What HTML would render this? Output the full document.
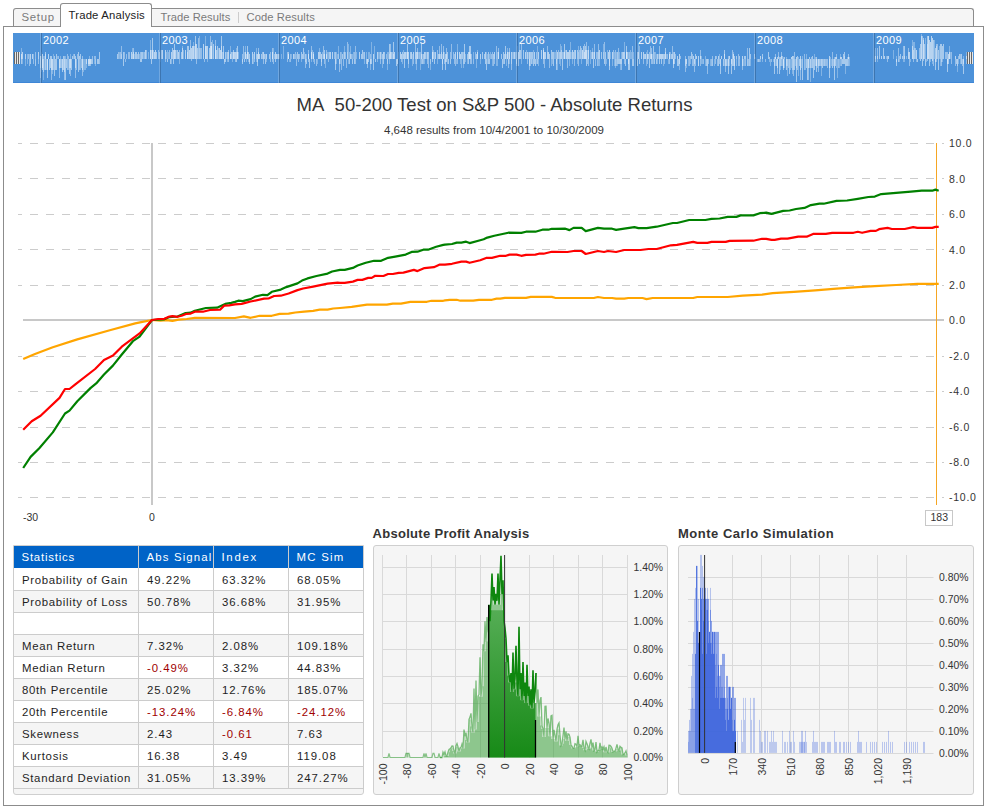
<!DOCTYPE html><html><head><meta charset="utf-8"><style>
*{box-sizing:border-box}
body{margin:0;width:986px;height:809px;position:relative;background:#fff;overflow:hidden;font-family:"Liberation Sans", sans-serif;color:#333}
.a{position:absolute}
.t{position:absolute;white-space:nowrap;line-height:1}
</style></head><body>
<div class="a" style="left:13px;top:8px;width:48px;height:19px;border:1px solid #8c8c8c;border-bottom:none;border-radius:3px 0 0 0;background:#f5f5f5"></div><div class="a" style="left:151px;top:8px;width:823px;height:19px;border:1px solid #8c8c8c;border-bottom:none;border-radius:0 3px 0 0;background:#f5f5f5"></div><div class="a" style="left:3px;top:26px;width:981px;height:780px;border:1px solid #8c8c8c;background:#fff"></div><div class="a" style="left:60px;top:3px;width:92px;height:24px;border:1px solid #8c8c8c;border-bottom:none;border-radius:3px 3px 0 0;background:#fff"></div><div class="t" style="left:21.5px;top:12px;font-size:11.4px;letter-spacing:0.7px;color:#7a7a7a">Setup</div><div class="t" style="left:68.5px;top:9.6px;font-size:11.3px;letter-spacing:0.2px;color:#222">Trade Analysis</div><div class="t" style="left:160.5px;top:12px;font-size:11.2px;letter-spacing:0.05px;color:#7a7a7a">Trade Results</div><div class="a" style="left:238px;top:12px;width:1px;height:11px;background:#ccc"></div><div class="t" style="left:246.5px;top:12px;font-size:11.2px;letter-spacing:0.1px;color:#7a7a7a">Code Results</div><svg class="a" style="left:13px;top:33px" width="961" height="50" viewBox="13 33 961 50"><rect x="13" y="33" width="961" height="50" fill="#4d92d9"/><rect x="13" y="82" width="961" height="1" fill="#3f86d6"/><rect x="21" y="54" width="1" height="5" fill="#fff" fill-opacity="0.6"/><rect x="21" y="59" width="1" height="5" fill="#fff" fill-opacity="0.5"/><rect x="21" y="48" width="1" height="11" fill="#fff" fill-opacity="0.3"/><rect x="22" y="52" width="1" height="7" fill="#fff" fill-opacity="0.6"/><rect x="22" y="59" width="1" height="5" fill="#fff" fill-opacity="0.3"/><rect x="25" y="54" width="1" height="5" fill="#fff" fill-opacity="0.6"/><rect x="25" y="59" width="1" height="7" fill="#fff" fill-opacity="0.3"/><rect x="27" y="54" width="1" height="5" fill="#fff" fill-opacity="0.3"/><rect x="27" y="59" width="1" height="5" fill="#fff" fill-opacity="0.3"/><rect x="28" y="54" width="1" height="5" fill="#fff" fill-opacity="0.4"/><rect x="29" y="54" width="1" height="5" fill="#fff" fill-opacity="0.3"/><rect x="29" y="59" width="1" height="7" fill="#fff" fill-opacity="0.4"/><rect x="30" y="54" width="1" height="5" fill="#fff" fill-opacity="0.6"/><rect x="30" y="59" width="1" height="5" fill="#fff" fill-opacity="0.5"/><rect x="32" y="54" width="1" height="5" fill="#fff" fill-opacity="0.6"/><rect x="33" y="54" width="1" height="5" fill="#fff" fill-opacity="0.3"/><rect x="33" y="59" width="1" height="5" fill="#fff" fill-opacity="0.4"/><rect x="35" y="52" width="1" height="7" fill="#fff" fill-opacity="0.4"/><rect x="35" y="59" width="1" height="7" fill="#fff" fill-opacity="0.5"/><rect x="38" y="52" width="1" height="7" fill="#fff" fill-opacity="0.6"/><rect x="38" y="59" width="1" height="5" fill="#fff" fill-opacity="0.4"/><rect x="40" y="56" width="1" height="3" fill="#fff" fill-opacity="0.5"/><rect x="40" y="59" width="1" height="9" fill="#fff" fill-opacity="0.3"/><rect x="40" y="59" width="1" height="19" fill="#fff" fill-opacity="0.3"/><rect x="41" y="56" width="1" height="3" fill="#fff" fill-opacity="0.6"/><rect x="41" y="59" width="1" height="13" fill="#fff" fill-opacity="0.4"/><rect x="41" y="52" width="1" height="7" fill="#fff" fill-opacity="0.3"/><rect x="42" y="54" width="1" height="5" fill="#fff" fill-opacity="0.6"/><rect x="42" y="59" width="1" height="9" fill="#fff" fill-opacity="0.5"/><rect x="42" y="59" width="1" height="11" fill="#fff" fill-opacity="0.5"/><rect x="43" y="56" width="1" height="3" fill="#fff" fill-opacity="0.3"/><rect x="43" y="59" width="1" height="13" fill="#fff" fill-opacity="0.4"/><rect x="43" y="59" width="1" height="21" fill="#fff" fill-opacity="0.3"/><rect x="44" y="56" width="1" height="3" fill="#fff" fill-opacity="0.3"/><rect x="44" y="59" width="1" height="11" fill="#fff" fill-opacity="0.3"/><rect x="45" y="54" width="1" height="5" fill="#fff" fill-opacity="0.4"/><rect x="45" y="59" width="1" height="11" fill="#fff" fill-opacity="0.5"/><rect x="45" y="52" width="1" height="7" fill="#fff" fill-opacity="0.5"/><rect x="46" y="59" width="1" height="11" fill="#fff" fill-opacity="0.3"/><rect x="47" y="59" width="1" height="11" fill="#fff" fill-opacity="0.5"/><rect x="47" y="59" width="1" height="19" fill="#fff" fill-opacity="0.5"/><rect x="48" y="54" width="1" height="5" fill="#fff" fill-opacity="0.6"/><rect x="49" y="59" width="1" height="11" fill="#fff" fill-opacity="0.5"/><rect x="50" y="56" width="1" height="3" fill="#fff" fill-opacity="0.5"/><rect x="50" y="59" width="1" height="9" fill="#fff" fill-opacity="0.5"/><rect x="51" y="56" width="1" height="3" fill="#fff" fill-opacity="0.5"/><rect x="51" y="59" width="1" height="11" fill="#fff" fill-opacity="0.5"/><rect x="51" y="59" width="1" height="21" fill="#fff" fill-opacity="0.4"/><rect x="52" y="59" width="1" height="11" fill="#fff" fill-opacity="0.5"/><rect x="52" y="59" width="1" height="15" fill="#fff" fill-opacity="0.3"/><rect x="53" y="54" width="1" height="5" fill="#fff" fill-opacity="0.3"/><rect x="53" y="59" width="1" height="11" fill="#fff" fill-opacity="0.4"/><rect x="54" y="56" width="1" height="3" fill="#fff" fill-opacity="0.5"/><rect x="54" y="59" width="1" height="17" fill="#fff" fill-opacity="0.5"/><rect x="55" y="59" width="1" height="11" fill="#fff" fill-opacity="0.5"/><rect x="56" y="54" width="1" height="5" fill="#fff" fill-opacity="0.5"/><rect x="56" y="59" width="1" height="11" fill="#fff" fill-opacity="0.5"/><rect x="57" y="56" width="1" height="3" fill="#fff" fill-opacity="0.3"/><rect x="58" y="56" width="1" height="3" fill="#fff" fill-opacity="0.4"/><rect x="59" y="59" width="1" height="9" fill="#fff" fill-opacity="0.5"/><rect x="59" y="59" width="1" height="19" fill="#fff" fill-opacity="0.4"/><rect x="60" y="56" width="1" height="3" fill="#fff" fill-opacity="0.3"/><rect x="60" y="59" width="1" height="9" fill="#fff" fill-opacity="0.5"/><rect x="61" y="59" width="1" height="9" fill="#fff" fill-opacity="0.4"/><rect x="62" y="59" width="1" height="11" fill="#fff" fill-opacity="0.3"/><rect x="62" y="59" width="1" height="13" fill="#fff" fill-opacity="0.5"/><rect x="63" y="56" width="1" height="3" fill="#fff" fill-opacity="0.5"/><rect x="63" y="59" width="1" height="11" fill="#fff" fill-opacity="0.5"/><rect x="64" y="56" width="1" height="3" fill="#fff" fill-opacity="0.4"/><rect x="64" y="59" width="1" height="13" fill="#fff" fill-opacity="0.4"/><rect x="64" y="59" width="1" height="21" fill="#fff" fill-opacity="0.4"/><rect x="65" y="56" width="1" height="3" fill="#fff" fill-opacity="0.3"/><rect x="65" y="59" width="1" height="21" fill="#fff" fill-opacity="0.5"/><rect x="66" y="59" width="1" height="9" fill="#fff" fill-opacity="0.5"/><rect x="67" y="54" width="1" height="5" fill="#fff" fill-opacity="0.4"/><rect x="67" y="59" width="1" height="11" fill="#fff" fill-opacity="0.4"/><rect x="68" y="56" width="1" height="3" fill="#fff" fill-opacity="0.4"/><rect x="68" y="59" width="1" height="11" fill="#fff" fill-opacity="0.3"/><rect x="69" y="59" width="1" height="9" fill="#fff" fill-opacity="0.3"/><rect x="69" y="59" width="1" height="15" fill="#fff" fill-opacity="0.5"/><rect x="70" y="54" width="1" height="5" fill="#fff" fill-opacity="0.3"/><rect x="70" y="59" width="1" height="9" fill="#fff" fill-opacity="0.5"/><rect x="70" y="59" width="1" height="17" fill="#fff" fill-opacity="0.4"/><rect x="71" y="59" width="1" height="11" fill="#fff" fill-opacity="0.5"/><rect x="72" y="56" width="1" height="3" fill="#fff" fill-opacity="0.5"/><rect x="73" y="54" width="1" height="5" fill="#fff" fill-opacity="0.3"/><rect x="74" y="54" width="1" height="5" fill="#fff" fill-opacity="0.5"/><rect x="75" y="56" width="1" height="3" fill="#fff" fill-opacity="0.5"/><rect x="75" y="59" width="1" height="9" fill="#fff" fill-opacity="0.5"/><rect x="75" y="59" width="1" height="19" fill="#fff" fill-opacity="0.4"/><rect x="76" y="59" width="1" height="11" fill="#fff" fill-opacity="0.4"/><rect x="77" y="54" width="1" height="5" fill="#fff" fill-opacity="0.4"/><rect x="78" y="59" width="1" height="13" fill="#fff" fill-opacity="0.5"/><rect x="78" y="52" width="1" height="7" fill="#fff" fill-opacity="0.5"/><rect x="79" y="56" width="1" height="3" fill="#fff" fill-opacity="0.5"/><rect x="79" y="59" width="1" height="11" fill="#fff" fill-opacity="0.4"/><rect x="80" y="54" width="1" height="5" fill="#fff" fill-opacity="0.5"/><rect x="80" y="59" width="1" height="11" fill="#fff" fill-opacity="0.3"/><rect x="81" y="59" width="1" height="9" fill="#fff" fill-opacity="0.4"/><rect x="82" y="56" width="1" height="3" fill="#fff" fill-opacity="0.4"/><rect x="82" y="59" width="1" height="11" fill="#fff" fill-opacity="0.5"/><rect x="82" y="59" width="1" height="17" fill="#fff" fill-opacity="0.4"/><rect x="83" y="59" width="1" height="13" fill="#fff" fill-opacity="0.3"/><rect x="84" y="59" width="1" height="11" fill="#fff" fill-opacity="0.3"/><rect x="85" y="59" width="1" height="11" fill="#fff" fill-opacity="0.3"/><rect x="86" y="59" width="1" height="5" fill="#fff" fill-opacity="0.5"/><rect x="86" y="59" width="1" height="9" fill="#fff" fill-opacity="0.3"/><rect x="88" y="59" width="1" height="5" fill="#fff" fill-opacity="0.4"/><rect x="88" y="59" width="1" height="7" fill="#fff" fill-opacity="0.5"/><rect x="89" y="56" width="1" height="3" fill="#fff" fill-opacity="0.3"/><rect x="89" y="59" width="1" height="5" fill="#fff" fill-opacity="0.4"/><rect x="89" y="59" width="1" height="7" fill="#fff" fill-opacity="0.5"/><rect x="90" y="59" width="1" height="5" fill="#fff" fill-opacity="0.5"/><rect x="90" y="59" width="1" height="7" fill="#fff" fill-opacity="0.4"/><rect x="91" y="59" width="1" height="5" fill="#fff" fill-opacity="0.5"/><rect x="92" y="56" width="1" height="3" fill="#fff" fill-opacity="0.4"/><rect x="92" y="59" width="1" height="5" fill="#fff" fill-opacity="0.5"/><rect x="94" y="56" width="1" height="3" fill="#fff" fill-opacity="0.4"/><rect x="94" y="59" width="1" height="5" fill="#fff" fill-opacity="0.3"/><rect x="95" y="56" width="1" height="3" fill="#fff" fill-opacity="0.4"/><rect x="95" y="59" width="1" height="5" fill="#fff" fill-opacity="0.3"/><rect x="95" y="59" width="1" height="7" fill="#fff" fill-opacity="0.3"/><rect x="97" y="59" width="1" height="5" fill="#fff" fill-opacity="0.5"/><rect x="98" y="59" width="1" height="5" fill="#fff" fill-opacity="0.5"/><rect x="99" y="59" width="1" height="5" fill="#fff" fill-opacity="0.4"/><rect x="99" y="52" width="1" height="7" fill="#fff" fill-opacity="0.5"/><rect x="117" y="54" width="1" height="5" fill="#fff" fill-opacity="0.5"/><rect x="118" y="52" width="1" height="7" fill="#fff" fill-opacity="0.4"/><rect x="119" y="52" width="1" height="7" fill="#fff" fill-opacity="0.3"/><rect x="120" y="52" width="1" height="7" fill="#fff" fill-opacity="0.4"/><rect x="121" y="54" width="1" height="5" fill="#fff" fill-opacity="0.3"/><rect x="121" y="46" width="1" height="13" fill="#fff" fill-opacity="0.4"/><rect x="123" y="52" width="1" height="7" fill="#fff" fill-opacity="0.5"/><rect x="123" y="59" width="1" height="7" fill="#fff" fill-opacity="0.5"/><rect x="124" y="52" width="1" height="7" fill="#fff" fill-opacity="0.4"/><rect x="125" y="59" width="1" height="3" fill="#fff" fill-opacity="0.4"/><rect x="126" y="54" width="1" height="5" fill="#fff" fill-opacity="0.4"/><rect x="128" y="52" width="1" height="7" fill="#fff" fill-opacity="0.4"/><rect x="129" y="52" width="1" height="7" fill="#fff" fill-opacity="0.4"/><rect x="131" y="52" width="1" height="7" fill="#fff" fill-opacity="0.6"/><rect x="132" y="54" width="1" height="5" fill="#fff" fill-opacity="0.3"/><rect x="132" y="48" width="1" height="11" fill="#fff" fill-opacity="0.3"/><rect x="133" y="52" width="1" height="7" fill="#fff" fill-opacity="0.5"/><rect x="133" y="48" width="1" height="11" fill="#fff" fill-opacity="0.4"/><rect x="134" y="54" width="1" height="5" fill="#fff" fill-opacity="0.3"/><rect x="135" y="52" width="1" height="7" fill="#fff" fill-opacity="0.5"/><rect x="136" y="52" width="1" height="7" fill="#fff" fill-opacity="0.5"/><rect x="137" y="54" width="1" height="5" fill="#fff" fill-opacity="0.4"/><rect x="138" y="52" width="1" height="7" fill="#fff" fill-opacity="0.5"/><rect x="139" y="54" width="1" height="5" fill="#fff" fill-opacity="0.3"/><rect x="140" y="52" width="1" height="7" fill="#fff" fill-opacity="0.4"/><rect x="140" y="59" width="1" height="3" fill="#fff" fill-opacity="0.5"/><rect x="141" y="52" width="1" height="7" fill="#fff" fill-opacity="0.5"/><rect x="141" y="59" width="1" height="3" fill="#fff" fill-opacity="0.5"/><rect x="142" y="52" width="1" height="7" fill="#fff" fill-opacity="0.5"/><rect x="143" y="52" width="1" height="7" fill="#fff" fill-opacity="0.3"/><rect x="144" y="52" width="1" height="7" fill="#fff" fill-opacity="0.4"/><rect x="145" y="50" width="1" height="9" fill="#fff" fill-opacity="0.6"/><rect x="146" y="50" width="1" height="9" fill="#fff" fill-opacity="0.4"/><rect x="148" y="52" width="1" height="7" fill="#fff" fill-opacity="0.3"/><rect x="150" y="50" width="1" height="9" fill="#fff" fill-opacity="0.6"/><rect x="150" y="40" width="1" height="19" fill="#fff" fill-opacity="0.3"/><rect x="151" y="50" width="1" height="9" fill="#fff" fill-opacity="0.4"/><rect x="151" y="59" width="1" height="5" fill="#fff" fill-opacity="0.5"/><rect x="152" y="50" width="1" height="9" fill="#fff" fill-opacity="0.5"/><rect x="152" y="38" width="1" height="21" fill="#fff" fill-opacity="0.5"/><rect x="153" y="50" width="1" height="9" fill="#fff" fill-opacity="0.4"/><rect x="154" y="52" width="1" height="7" fill="#fff" fill-opacity="0.6"/><rect x="155" y="50" width="1" height="9" fill="#fff" fill-opacity="0.6"/><rect x="156" y="52" width="1" height="7" fill="#fff" fill-opacity="0.5"/><rect x="158" y="50" width="1" height="9" fill="#fff" fill-opacity="0.4"/><rect x="159" y="52" width="1" height="7" fill="#fff" fill-opacity="0.4"/><rect x="160" y="50" width="1" height="9" fill="#fff" fill-opacity="0.3"/><rect x="160" y="59" width="1" height="3" fill="#fff" fill-opacity="0.3"/><rect x="161" y="50" width="1" height="9" fill="#fff" fill-opacity="0.4"/><rect x="162" y="50" width="1" height="9" fill="#fff" fill-opacity="0.6"/><rect x="165" y="50" width="1" height="9" fill="#fff" fill-opacity="0.6"/><rect x="165" y="59" width="1" height="3" fill="#fff" fill-opacity="0.4"/><rect x="166" y="52" width="1" height="7" fill="#fff" fill-opacity="0.3"/><rect x="167" y="50" width="1" height="9" fill="#fff" fill-opacity="0.3"/><rect x="167" y="59" width="1" height="3" fill="#fff" fill-opacity="0.5"/><rect x="168" y="52" width="1" height="7" fill="#fff" fill-opacity="0.3"/><rect x="169" y="50" width="1" height="9" fill="#fff" fill-opacity="0.4"/><rect x="170" y="59" width="1" height="5" fill="#fff" fill-opacity="0.5"/><rect x="171" y="52" width="1" height="7" fill="#fff" fill-opacity="0.6"/><rect x="171" y="59" width="1" height="5" fill="#fff" fill-opacity="0.3"/><rect x="172" y="48" width="1" height="11" fill="#fff" fill-opacity="0.5"/><rect x="173" y="50" width="1" height="9" fill="#fff" fill-opacity="0.6"/><rect x="173" y="59" width="1" height="5" fill="#fff" fill-opacity="0.5"/><rect x="174" y="50" width="1" height="9" fill="#fff" fill-opacity="0.4"/><rect x="174" y="44" width="1" height="15" fill="#fff" fill-opacity="0.5"/><rect x="175" y="50" width="1" height="9" fill="#fff" fill-opacity="0.6"/><rect x="176" y="50" width="1" height="9" fill="#fff" fill-opacity="0.3"/><rect x="177" y="50" width="1" height="9" fill="#fff" fill-opacity="0.5"/><rect x="178" y="52" width="1" height="7" fill="#fff" fill-opacity="0.6"/><rect x="179" y="50" width="1" height="9" fill="#fff" fill-opacity="0.4"/><rect x="179" y="59" width="1" height="5" fill="#fff" fill-opacity="0.3"/><rect x="181" y="52" width="1" height="7" fill="#fff" fill-opacity="0.5"/><rect x="182" y="48" width="1" height="11" fill="#fff" fill-opacity="0.5"/><rect x="182" y="46" width="1" height="13" fill="#fff" fill-opacity="0.3"/><rect x="183" y="50" width="1" height="9" fill="#fff" fill-opacity="0.3"/><rect x="185" y="50" width="1" height="9" fill="#fff" fill-opacity="0.6"/><rect x="187" y="52" width="1" height="7" fill="#fff" fill-opacity="0.4"/><rect x="187" y="46" width="1" height="13" fill="#fff" fill-opacity="0.5"/><rect x="188" y="46" width="1" height="13" fill="#fff" fill-opacity="0.5"/><rect x="189" y="50" width="1" height="9" fill="#fff" fill-opacity="0.6"/><rect x="190" y="46" width="1" height="13" fill="#fff" fill-opacity="0.3"/><rect x="190" y="40" width="1" height="19" fill="#fff" fill-opacity="0.4"/><rect x="191" y="48" width="1" height="11" fill="#fff" fill-opacity="0.6"/><rect x="191" y="59" width="1" height="2" fill="#fff" fill-opacity="0.4"/><rect x="192" y="46" width="1" height="13" fill="#fff" fill-opacity="0.6"/><rect x="193" y="46" width="1" height="13" fill="#fff" fill-opacity="0.5"/><rect x="193" y="42" width="1" height="17" fill="#fff" fill-opacity="0.3"/><rect x="194" y="46" width="1" height="13" fill="#fff" fill-opacity="0.4"/><rect x="195" y="44" width="1" height="15" fill="#fff" fill-opacity="0.4"/><rect x="195" y="36" width="1" height="23" fill="#fff" fill-opacity="0.5"/><rect x="196" y="44" width="1" height="15" fill="#fff" fill-opacity="0.6"/><rect x="196" y="59" width="1" height="5" fill="#fff" fill-opacity="0.4"/><rect x="197" y="48" width="1" height="11" fill="#fff" fill-opacity="0.5"/><rect x="198" y="38" width="1" height="21" fill="#fff" fill-opacity="0.4"/><rect x="199" y="48" width="1" height="11" fill="#fff" fill-opacity="0.3"/><rect x="199" y="36" width="1" height="23" fill="#fff" fill-opacity="0.3"/><rect x="200" y="48" width="1" height="11" fill="#fff" fill-opacity="0.4"/><rect x="201" y="48" width="1" height="11" fill="#fff" fill-opacity="0.4"/><rect x="203" y="44" width="1" height="15" fill="#fff" fill-opacity="0.6"/><rect x="204" y="59" width="1" height="3" fill="#fff" fill-opacity="0.4"/><rect x="205" y="46" width="1" height="13" fill="#fff" fill-opacity="0.6"/><rect x="205" y="36" width="1" height="23" fill="#fff" fill-opacity="0.3"/><rect x="206" y="46" width="1" height="13" fill="#fff" fill-opacity="0.6"/><rect x="207" y="46" width="1" height="13" fill="#fff" fill-opacity="0.6"/><rect x="207" y="59" width="1" height="3" fill="#fff" fill-opacity="0.3"/><rect x="209" y="48" width="1" height="11" fill="#fff" fill-opacity="0.5"/><rect x="210" y="46" width="1" height="13" fill="#fff" fill-opacity="0.5"/><rect x="210" y="36" width="1" height="23" fill="#fff" fill-opacity="0.4"/><rect x="211" y="46" width="1" height="13" fill="#fff" fill-opacity="0.6"/><rect x="211" y="42" width="1" height="17" fill="#fff" fill-opacity="0.5"/><rect x="212" y="40" width="1" height="19" fill="#fff" fill-opacity="0.3"/><rect x="213" y="44" width="1" height="15" fill="#fff" fill-opacity="0.5"/><rect x="215" y="46" width="1" height="13" fill="#fff" fill-opacity="0.6"/><rect x="215" y="40" width="1" height="19" fill="#fff" fill-opacity="0.4"/><rect x="216" y="50" width="1" height="9" fill="#fff" fill-opacity="0.5"/><rect x="217" y="46" width="1" height="13" fill="#fff" fill-opacity="0.5"/><rect x="218" y="48" width="1" height="11" fill="#fff" fill-opacity="0.3"/><rect x="219" y="48" width="1" height="11" fill="#fff" fill-opacity="0.6"/><rect x="220" y="50" width="1" height="9" fill="#fff" fill-opacity="0.6"/><rect x="221" y="46" width="1" height="13" fill="#fff" fill-opacity="0.4"/><rect x="221" y="36" width="1" height="23" fill="#fff" fill-opacity="0.5"/><rect x="222" y="52" width="1" height="7" fill="#fff" fill-opacity="0.4"/><rect x="223" y="52" width="1" height="7" fill="#fff" fill-opacity="0.3"/><rect x="223" y="46" width="1" height="13" fill="#fff" fill-opacity="0.5"/><rect x="224" y="59" width="1" height="3" fill="#fff" fill-opacity="0.3"/><rect x="224" y="59" width="1" height="5" fill="#fff" fill-opacity="0.4"/><rect x="225" y="52" width="1" height="7" fill="#fff" fill-opacity="0.5"/><rect x="225" y="59" width="1" height="3" fill="#fff" fill-opacity="0.5"/><rect x="226" y="52" width="1" height="7" fill="#fff" fill-opacity="0.3"/><rect x="227" y="52" width="1" height="7" fill="#fff" fill-opacity="0.5"/><rect x="227" y="59" width="1" height="3" fill="#fff" fill-opacity="0.3"/><rect x="228" y="52" width="1" height="7" fill="#fff" fill-opacity="0.4"/><rect x="228" y="59" width="1" height="3" fill="#fff" fill-opacity="0.4"/><rect x="228" y="50" width="1" height="9" fill="#fff" fill-opacity="0.4"/><rect x="230" y="54" width="1" height="5" fill="#fff" fill-opacity="0.6"/><rect x="230" y="46" width="1" height="13" fill="#fff" fill-opacity="0.3"/><rect x="231" y="52" width="1" height="7" fill="#fff" fill-opacity="0.5"/><rect x="232" y="52" width="1" height="7" fill="#fff" fill-opacity="0.4"/><rect x="232" y="59" width="1" height="3" fill="#fff" fill-opacity="0.3"/><rect x="233" y="52" width="1" height="7" fill="#fff" fill-opacity="0.4"/><rect x="233" y="50" width="1" height="9" fill="#fff" fill-opacity="0.5"/><rect x="234" y="52" width="1" height="7" fill="#fff" fill-opacity="0.6"/><rect x="235" y="52" width="1" height="7" fill="#fff" fill-opacity="0.6"/><rect x="235" y="59" width="1" height="3" fill="#fff" fill-opacity="0.4"/><rect x="236" y="52" width="1" height="7" fill="#fff" fill-opacity="0.4"/><rect x="236" y="59" width="1" height="3" fill="#fff" fill-opacity="0.5"/><rect x="236" y="48" width="1" height="11" fill="#fff" fill-opacity="0.3"/><rect x="237" y="52" width="1" height="7" fill="#fff" fill-opacity="0.5"/><rect x="237" y="46" width="1" height="13" fill="#fff" fill-opacity="0.5"/><rect x="238" y="52" width="1" height="7" fill="#fff" fill-opacity="0.3"/><rect x="242" y="54" width="1" height="5" fill="#fff" fill-opacity="0.4"/><rect x="242" y="59" width="1" height="3" fill="#fff" fill-opacity="0.3"/><rect x="242" y="59" width="1" height="5" fill="#fff" fill-opacity="0.5"/><rect x="243" y="46" width="1" height="13" fill="#fff" fill-opacity="0.4"/><rect x="244" y="52" width="1" height="7" fill="#fff" fill-opacity="0.3"/><rect x="244" y="59" width="1" height="3" fill="#fff" fill-opacity="0.5"/><rect x="245" y="52" width="1" height="7" fill="#fff" fill-opacity="0.6"/><rect x="245" y="46" width="1" height="13" fill="#fff" fill-opacity="0.3"/><rect x="246" y="54" width="1" height="5" fill="#fff" fill-opacity="0.4"/><rect x="246" y="59" width="1" height="3" fill="#fff" fill-opacity="0.3"/><rect x="247" y="52" width="1" height="7" fill="#fff" fill-opacity="0.5"/><rect x="247" y="46" width="1" height="13" fill="#fff" fill-opacity="0.5"/><rect x="248" y="52" width="1" height="7" fill="#fff" fill-opacity="0.5"/><rect x="248" y="59" width="1" height="3" fill="#fff" fill-opacity="0.3"/><rect x="249" y="54" width="1" height="5" fill="#fff" fill-opacity="0.5"/><rect x="249" y="59" width="1" height="3" fill="#fff" fill-opacity="0.3"/><rect x="249" y="59" width="1" height="5" fill="#fff" fill-opacity="0.5"/><rect x="252" y="52" width="1" height="7" fill="#fff" fill-opacity="0.6"/><rect x="252" y="59" width="1" height="5" fill="#fff" fill-opacity="0.5"/><rect x="253" y="54" width="1" height="5" fill="#fff" fill-opacity="0.3"/><rect x="253" y="59" width="1" height="5" fill="#fff" fill-opacity="0.3"/><rect x="254" y="52" width="1" height="7" fill="#fff" fill-opacity="0.6"/><rect x="254" y="59" width="1" height="3" fill="#fff" fill-opacity="0.4"/><rect x="256" y="54" width="1" height="5" fill="#fff" fill-opacity="0.3"/><rect x="256" y="59" width="1" height="3" fill="#fff" fill-opacity="0.3"/><rect x="256" y="48" width="1" height="11" fill="#fff" fill-opacity="0.3"/><rect x="257" y="54" width="1" height="5" fill="#fff" fill-opacity="0.6"/><rect x="257" y="59" width="1" height="3" fill="#fff" fill-opacity="0.3"/><rect x="257" y="59" width="1" height="7" fill="#fff" fill-opacity="0.5"/><rect x="258" y="52" width="1" height="7" fill="#fff" fill-opacity="0.5"/><rect x="258" y="48" width="1" height="11" fill="#fff" fill-opacity="0.4"/><rect x="259" y="54" width="1" height="5" fill="#fff" fill-opacity="0.6"/><rect x="261" y="54" width="1" height="5" fill="#fff" fill-opacity="0.5"/><rect x="262" y="52" width="1" height="7" fill="#fff" fill-opacity="0.4"/><rect x="263" y="52" width="1" height="7" fill="#fff" fill-opacity="0.6"/><rect x="263" y="59" width="1" height="5" fill="#fff" fill-opacity="0.4"/><rect x="264" y="54" width="1" height="5" fill="#fff" fill-opacity="0.5"/><rect x="265" y="54" width="1" height="5" fill="#fff" fill-opacity="0.4"/><rect x="265" y="59" width="1" height="5" fill="#fff" fill-opacity="0.5"/><rect x="266" y="54" width="1" height="5" fill="#fff" fill-opacity="0.6"/><rect x="266" y="59" width="1" height="3" fill="#fff" fill-opacity="0.3"/><rect x="269" y="54" width="1" height="5" fill="#fff" fill-opacity="0.5"/><rect x="270" y="52" width="1" height="7" fill="#fff" fill-opacity="0.4"/><rect x="270" y="59" width="1" height="3" fill="#fff" fill-opacity="0.4"/><rect x="272" y="52" width="1" height="7" fill="#fff" fill-opacity="0.6"/><rect x="272" y="59" width="1" height="3" fill="#fff" fill-opacity="0.4"/><rect x="272" y="48" width="1" height="11" fill="#fff" fill-opacity="0.4"/><rect x="273" y="59" width="1" height="5" fill="#fff" fill-opacity="0.4"/><rect x="273" y="48" width="1" height="11" fill="#fff" fill-opacity="0.3"/><rect x="274" y="54" width="1" height="5" fill="#fff" fill-opacity="0.4"/><rect x="275" y="52" width="1" height="7" fill="#fff" fill-opacity="0.6"/><rect x="275" y="59" width="1" height="3" fill="#fff" fill-opacity="0.5"/><rect x="276" y="54" width="1" height="5" fill="#fff" fill-opacity="0.6"/><rect x="277" y="54" width="1" height="5" fill="#fff" fill-opacity="0.4"/><rect x="278" y="54" width="1" height="5" fill="#fff" fill-opacity="0.5"/><rect x="279" y="54" width="1" height="5" fill="#fff" fill-opacity="0.6"/><rect x="281" y="54" width="1" height="5" fill="#fff" fill-opacity="0.3"/><rect x="283" y="46" width="1" height="13" fill="#fff" fill-opacity="0.3"/><rect x="287" y="52" width="1" height="7" fill="#fff" fill-opacity="0.4"/><rect x="287" y="59" width="1" height="3" fill="#fff" fill-opacity="0.4"/><rect x="288" y="54" width="1" height="5" fill="#fff" fill-opacity="0.6"/><rect x="288" y="52" width="1" height="7" fill="#fff" fill-opacity="0.5"/><rect x="289" y="59" width="1" height="3" fill="#fff" fill-opacity="0.3"/><rect x="290" y="54" width="1" height="5" fill="#fff" fill-opacity="0.4"/><rect x="290" y="59" width="1" height="3" fill="#fff" fill-opacity="0.4"/><rect x="291" y="54" width="1" height="5" fill="#fff" fill-opacity="0.3"/><rect x="293" y="54" width="1" height="5" fill="#fff" fill-opacity="0.6"/><rect x="294" y="54" width="1" height="5" fill="#fff" fill-opacity="0.4"/><rect x="295" y="52" width="1" height="7" fill="#fff" fill-opacity="0.4"/><rect x="296" y="54" width="1" height="5" fill="#fff" fill-opacity="0.3"/><rect x="296" y="59" width="1" height="7" fill="#fff" fill-opacity="0.4"/><rect x="297" y="52" width="1" height="7" fill="#fff" fill-opacity="0.5"/><rect x="298" y="54" width="1" height="5" fill="#fff" fill-opacity="0.5"/><rect x="298" y="59" width="1" height="3" fill="#fff" fill-opacity="0.4"/><rect x="299" y="54" width="1" height="5" fill="#fff" fill-opacity="0.4"/><rect x="301" y="52" width="1" height="7" fill="#fff" fill-opacity="0.5"/><rect x="301" y="59" width="1" height="3" fill="#fff" fill-opacity="0.3"/><rect x="302" y="54" width="1" height="5" fill="#fff" fill-opacity="0.5"/><rect x="303" y="48" width="1" height="11" fill="#fff" fill-opacity="0.5"/><rect x="304" y="52" width="1" height="7" fill="#fff" fill-opacity="0.3"/><rect x="305" y="54" width="1" height="5" fill="#fff" fill-opacity="0.5"/><rect x="305" y="59" width="1" height="3" fill="#fff" fill-opacity="0.3"/><rect x="305" y="59" width="1" height="9" fill="#fff" fill-opacity="0.4"/><rect x="306" y="54" width="1" height="5" fill="#fff" fill-opacity="0.3"/><rect x="306" y="59" width="1" height="5" fill="#fff" fill-opacity="0.5"/><rect x="308" y="54" width="1" height="5" fill="#fff" fill-opacity="0.6"/><rect x="308" y="59" width="1" height="3" fill="#fff" fill-opacity="0.4"/><rect x="308" y="50" width="1" height="9" fill="#fff" fill-opacity="0.4"/><rect x="309" y="59" width="1" height="9" fill="#fff" fill-opacity="0.5"/><rect x="311" y="52" width="1" height="7" fill="#fff" fill-opacity="0.6"/><rect x="311" y="59" width="1" height="3" fill="#fff" fill-opacity="0.3"/><rect x="311" y="46" width="1" height="13" fill="#fff" fill-opacity="0.4"/><rect x="312" y="50" width="1" height="9" fill="#fff" fill-opacity="0.3"/><rect x="313" y="54" width="1" height="5" fill="#fff" fill-opacity="0.5"/><rect x="313" y="59" width="1" height="3" fill="#fff" fill-opacity="0.3"/><rect x="313" y="52" width="1" height="7" fill="#fff" fill-opacity="0.5"/><rect x="314" y="59" width="1" height="5" fill="#fff" fill-opacity="0.4"/><rect x="316" y="59" width="1" height="7" fill="#fff" fill-opacity="0.4"/><rect x="317" y="59" width="1" height="5" fill="#fff" fill-opacity="0.3"/><rect x="318" y="52" width="1" height="7" fill="#fff" fill-opacity="0.6"/><rect x="319" y="52" width="1" height="7" fill="#fff" fill-opacity="0.4"/><rect x="319" y="48" width="1" height="11" fill="#fff" fill-opacity="0.3"/><rect x="320" y="52" width="1" height="7" fill="#fff" fill-opacity="0.5"/><rect x="321" y="54" width="1" height="5" fill="#fff" fill-opacity="0.6"/><rect x="321" y="59" width="1" height="3" fill="#fff" fill-opacity="0.3"/><rect x="321" y="59" width="1" height="7" fill="#fff" fill-opacity="0.5"/><rect x="322" y="52" width="1" height="7" fill="#fff" fill-opacity="0.3"/><rect x="323" y="54" width="1" height="5" fill="#fff" fill-opacity="0.3"/><rect x="323" y="46" width="1" height="13" fill="#fff" fill-opacity="0.4"/><rect x="324" y="54" width="1" height="5" fill="#fff" fill-opacity="0.5"/><rect x="324" y="59" width="1" height="5" fill="#fff" fill-opacity="0.4"/><rect x="324" y="50" width="1" height="9" fill="#fff" fill-opacity="0.5"/><rect x="325" y="59" width="1" height="9" fill="#fff" fill-opacity="0.3"/><rect x="326" y="54" width="1" height="5" fill="#fff" fill-opacity="0.5"/><rect x="326" y="50" width="1" height="9" fill="#fff" fill-opacity="0.4"/><rect x="327" y="52" width="1" height="7" fill="#fff" fill-opacity="0.3"/><rect x="328" y="52" width="1" height="7" fill="#fff" fill-opacity="0.3"/><rect x="328" y="59" width="1" height="3" fill="#fff" fill-opacity="0.4"/><rect x="329" y="52" width="1" height="7" fill="#fff" fill-opacity="0.5"/><rect x="330" y="52" width="1" height="7" fill="#fff" fill-opacity="0.6"/><rect x="332" y="52" width="1" height="7" fill="#fff" fill-opacity="0.6"/><rect x="334" y="52" width="1" height="7" fill="#fff" fill-opacity="0.4"/><rect x="335" y="52" width="1" height="7" fill="#fff" fill-opacity="0.5"/><rect x="335" y="59" width="1" height="5" fill="#fff" fill-opacity="0.3"/><rect x="335" y="59" width="1" height="11" fill="#fff" fill-opacity="0.5"/><rect x="336" y="52" width="1" height="7" fill="#fff" fill-opacity="0.3"/><rect x="336" y="59" width="1" height="5" fill="#fff" fill-opacity="0.3"/><rect x="337" y="54" width="1" height="5" fill="#fff" fill-opacity="0.3"/><rect x="338" y="54" width="1" height="5" fill="#fff" fill-opacity="0.3"/><rect x="338" y="46" width="1" height="13" fill="#fff" fill-opacity="0.3"/><rect x="339" y="59" width="1" height="5" fill="#fff" fill-opacity="0.4"/><rect x="339" y="59" width="1" height="13" fill="#fff" fill-opacity="0.4"/><rect x="340" y="52" width="1" height="7" fill="#fff" fill-opacity="0.4"/><rect x="340" y="59" width="1" height="5" fill="#fff" fill-opacity="0.3"/><rect x="341" y="52" width="1" height="7" fill="#fff" fill-opacity="0.3"/><rect x="341" y="59" width="1" height="11" fill="#fff" fill-opacity="0.4"/><rect x="342" y="54" width="1" height="5" fill="#fff" fill-opacity="0.5"/><rect x="343" y="52" width="1" height="7" fill="#fff" fill-opacity="0.3"/><rect x="343" y="59" width="1" height="7" fill="#fff" fill-opacity="0.4"/><rect x="344" y="52" width="1" height="7" fill="#fff" fill-opacity="0.4"/><rect x="344" y="46" width="1" height="13" fill="#fff" fill-opacity="0.3"/><rect x="345" y="52" width="1" height="7" fill="#fff" fill-opacity="0.4"/><rect x="346" y="59" width="1" height="9" fill="#fff" fill-opacity="0.4"/><rect x="347" y="52" width="1" height="7" fill="#fff" fill-opacity="0.3"/><rect x="347" y="42" width="1" height="17" fill="#fff" fill-opacity="0.4"/><rect x="348" y="59" width="1" height="5" fill="#fff" fill-opacity="0.3"/><rect x="348" y="44" width="1" height="15" fill="#fff" fill-opacity="0.3"/><rect x="349" y="52" width="1" height="7" fill="#fff" fill-opacity="0.3"/><rect x="349" y="59" width="1" height="5" fill="#fff" fill-opacity="0.5"/><rect x="350" y="54" width="1" height="5" fill="#fff" fill-opacity="0.4"/><rect x="350" y="46" width="1" height="13" fill="#fff" fill-opacity="0.3"/><rect x="351" y="54" width="1" height="5" fill="#fff" fill-opacity="0.4"/><rect x="352" y="54" width="1" height="5" fill="#fff" fill-opacity="0.3"/><rect x="352" y="59" width="1" height="5" fill="#fff" fill-opacity="0.5"/><rect x="353" y="52" width="1" height="7" fill="#fff" fill-opacity="0.3"/><rect x="354" y="52" width="1" height="7" fill="#fff" fill-opacity="0.4"/><rect x="354" y="59" width="1" height="5" fill="#fff" fill-opacity="0.5"/><rect x="355" y="59" width="1" height="5" fill="#fff" fill-opacity="0.4"/><rect x="355" y="46" width="1" height="13" fill="#fff" fill-opacity="0.4"/><rect x="356" y="52" width="1" height="7" fill="#fff" fill-opacity="0.3"/><rect x="359" y="52" width="1" height="7" fill="#fff" fill-opacity="0.6"/><rect x="361" y="54" width="1" height="5" fill="#fff" fill-opacity="0.5"/><rect x="362" y="50" width="1" height="9" fill="#fff" fill-opacity="0.5"/><rect x="363" y="52" width="1" height="7" fill="#fff" fill-opacity="0.4"/><rect x="364" y="52" width="1" height="7" fill="#fff" fill-opacity="0.5"/><rect x="364" y="59" width="1" height="5" fill="#fff" fill-opacity="0.3"/><rect x="366" y="52" width="1" height="7" fill="#fff" fill-opacity="0.3"/><rect x="366" y="59" width="1" height="5" fill="#fff" fill-opacity="0.5"/><rect x="367" y="59" width="1" height="5" fill="#fff" fill-opacity="0.5"/><rect x="367" y="59" width="1" height="9" fill="#fff" fill-opacity="0.4"/><rect x="368" y="52" width="1" height="7" fill="#fff" fill-opacity="0.3"/><rect x="368" y="59" width="1" height="3" fill="#fff" fill-opacity="0.5"/><rect x="369" y="52" width="1" height="7" fill="#fff" fill-opacity="0.3"/><rect x="370" y="54" width="1" height="5" fill="#fff" fill-opacity="0.4"/><rect x="370" y="59" width="1" height="5" fill="#fff" fill-opacity="0.5"/><rect x="370" y="59" width="1" height="11" fill="#fff" fill-opacity="0.3"/><rect x="371" y="59" width="1" height="5" fill="#fff" fill-opacity="0.5"/><rect x="371" y="42" width="1" height="17" fill="#fff" fill-opacity="0.3"/><rect x="373" y="54" width="1" height="5" fill="#fff" fill-opacity="0.6"/><rect x="373" y="59" width="1" height="11" fill="#fff" fill-opacity="0.5"/><rect x="374" y="46" width="1" height="13" fill="#fff" fill-opacity="0.3"/><rect x="375" y="59" width="1" height="3" fill="#fff" fill-opacity="0.5"/><rect x="377" y="52" width="1" height="7" fill="#fff" fill-opacity="0.6"/><rect x="377" y="59" width="1" height="3" fill="#fff" fill-opacity="0.3"/><rect x="378" y="52" width="1" height="7" fill="#fff" fill-opacity="0.3"/><rect x="379" y="52" width="1" height="7" fill="#fff" fill-opacity="0.3"/><rect x="380" y="52" width="1" height="7" fill="#fff" fill-opacity="0.6"/><rect x="380" y="59" width="1" height="5" fill="#fff" fill-opacity="0.4"/><rect x="381" y="52" width="1" height="7" fill="#fff" fill-opacity="0.3"/><rect x="382" y="54" width="1" height="5" fill="#fff" fill-opacity="0.5"/><rect x="382" y="59" width="1" height="9" fill="#fff" fill-opacity="0.3"/><rect x="383" y="52" width="1" height="7" fill="#fff" fill-opacity="0.6"/><rect x="383" y="59" width="1" height="5" fill="#fff" fill-opacity="0.5"/><rect x="384" y="52" width="1" height="7" fill="#fff" fill-opacity="0.5"/><rect x="386" y="54" width="1" height="5" fill="#fff" fill-opacity="0.4"/><rect x="387" y="52" width="1" height="7" fill="#fff" fill-opacity="0.3"/><rect x="387" y="59" width="1" height="5" fill="#fff" fill-opacity="0.4"/><rect x="387" y="59" width="1" height="11" fill="#fff" fill-opacity="0.3"/><rect x="388" y="52" width="1" height="7" fill="#fff" fill-opacity="0.3"/><rect x="389" y="54" width="1" height="5" fill="#fff" fill-opacity="0.3"/><rect x="389" y="59" width="1" height="5" fill="#fff" fill-opacity="0.3"/><rect x="389" y="44" width="1" height="15" fill="#fff" fill-opacity="0.5"/><rect x="390" y="52" width="1" height="7" fill="#fff" fill-opacity="0.5"/><rect x="390" y="44" width="1" height="15" fill="#fff" fill-opacity="0.4"/><rect x="391" y="52" width="1" height="7" fill="#fff" fill-opacity="0.5"/><rect x="392" y="52" width="1" height="7" fill="#fff" fill-opacity="0.4"/><rect x="393" y="54" width="1" height="5" fill="#fff" fill-opacity="0.4"/><rect x="393" y="42" width="1" height="17" fill="#fff" fill-opacity="0.5"/><rect x="394" y="52" width="1" height="7" fill="#fff" fill-opacity="0.6"/><rect x="396" y="59" width="1" height="7" fill="#fff" fill-opacity="0.5"/><rect x="397" y="59" width="1" height="5" fill="#fff" fill-opacity="0.5"/><rect x="398" y="52" width="1" height="7" fill="#fff" fill-opacity="0.6"/><rect x="400" y="52" width="1" height="7" fill="#fff" fill-opacity="0.6"/><rect x="401" y="54" width="1" height="5" fill="#fff" fill-opacity="0.6"/><rect x="401" y="59" width="1" height="3" fill="#fff" fill-opacity="0.4"/><rect x="402" y="52" width="1" height="7" fill="#fff" fill-opacity="0.5"/><rect x="402" y="59" width="1" height="5" fill="#fff" fill-opacity="0.3"/><rect x="403" y="54" width="1" height="5" fill="#fff" fill-opacity="0.4"/><rect x="403" y="50" width="1" height="9" fill="#fff" fill-opacity="0.3"/><rect x="404" y="52" width="1" height="7" fill="#fff" fill-opacity="0.6"/><rect x="404" y="59" width="1" height="9" fill="#fff" fill-opacity="0.5"/><rect x="405" y="52" width="1" height="7" fill="#fff" fill-opacity="0.6"/><rect x="406" y="52" width="1" height="7" fill="#fff" fill-opacity="0.4"/><rect x="407" y="52" width="1" height="7" fill="#fff" fill-opacity="0.5"/><rect x="407" y="44" width="1" height="15" fill="#fff" fill-opacity="0.5"/><rect x="408" y="52" width="1" height="7" fill="#fff" fill-opacity="0.6"/><rect x="408" y="59" width="1" height="5" fill="#fff" fill-opacity="0.4"/><rect x="408" y="59" width="1" height="9" fill="#fff" fill-opacity="0.3"/><rect x="410" y="52" width="1" height="7" fill="#fff" fill-opacity="0.5"/><rect x="411" y="52" width="1" height="7" fill="#fff" fill-opacity="0.6"/><rect x="412" y="54" width="1" height="5" fill="#fff" fill-opacity="0.3"/><rect x="412" y="59" width="1" height="7" fill="#fff" fill-opacity="0.3"/><rect x="413" y="52" width="1" height="7" fill="#fff" fill-opacity="0.6"/><rect x="413" y="59" width="1" height="5" fill="#fff" fill-opacity="0.4"/><rect x="415" y="52" width="1" height="7" fill="#fff" fill-opacity="0.3"/><rect x="415" y="59" width="1" height="5" fill="#fff" fill-opacity="0.3"/><rect x="415" y="44" width="1" height="15" fill="#fff" fill-opacity="0.4"/><rect x="416" y="52" width="1" height="7" fill="#fff" fill-opacity="0.6"/><rect x="416" y="59" width="1" height="5" fill="#fff" fill-opacity="0.3"/><rect x="416" y="59" width="1" height="11" fill="#fff" fill-opacity="0.3"/><rect x="417" y="52" width="1" height="7" fill="#fff" fill-opacity="0.5"/><rect x="417" y="48" width="1" height="11" fill="#fff" fill-opacity="0.4"/><rect x="418" y="52" width="1" height="7" fill="#fff" fill-opacity="0.3"/><rect x="419" y="52" width="1" height="7" fill="#fff" fill-opacity="0.4"/><rect x="420" y="52" width="1" height="7" fill="#fff" fill-opacity="0.3"/><rect x="420" y="59" width="1" height="11" fill="#fff" fill-opacity="0.3"/><rect x="421" y="54" width="1" height="5" fill="#fff" fill-opacity="0.4"/><rect x="421" y="59" width="1" height="5" fill="#fff" fill-opacity="0.4"/><rect x="421" y="44" width="1" height="15" fill="#fff" fill-opacity="0.5"/><rect x="422" y="54" width="1" height="5" fill="#fff" fill-opacity="0.3"/><rect x="422" y="59" width="1" height="5" fill="#fff" fill-opacity="0.5"/><rect x="423" y="54" width="1" height="5" fill="#fff" fill-opacity="0.5"/><rect x="423" y="59" width="1" height="5" fill="#fff" fill-opacity="0.4"/><rect x="424" y="52" width="1" height="7" fill="#fff" fill-opacity="0.6"/><rect x="424" y="59" width="1" height="5" fill="#fff" fill-opacity="0.3"/><rect x="425" y="52" width="1" height="7" fill="#fff" fill-opacity="0.5"/><rect x="426" y="52" width="1" height="7" fill="#fff" fill-opacity="0.3"/><rect x="427" y="52" width="1" height="7" fill="#fff" fill-opacity="0.6"/><rect x="427" y="59" width="1" height="5" fill="#fff" fill-opacity="0.4"/><rect x="428" y="52" width="1" height="7" fill="#fff" fill-opacity="0.5"/><rect x="428" y="59" width="1" height="9" fill="#fff" fill-opacity="0.4"/><rect x="430" y="59" width="1" height="5" fill="#fff" fill-opacity="0.3"/><rect x="430" y="59" width="1" height="11" fill="#fff" fill-opacity="0.3"/><rect x="432" y="52" width="1" height="7" fill="#fff" fill-opacity="0.6"/><rect x="432" y="59" width="1" height="3" fill="#fff" fill-opacity="0.5"/><rect x="432" y="46" width="1" height="13" fill="#fff" fill-opacity="0.4"/><rect x="433" y="52" width="1" height="7" fill="#fff" fill-opacity="0.3"/><rect x="433" y="50" width="1" height="9" fill="#fff" fill-opacity="0.3"/><rect x="434" y="52" width="1" height="7" fill="#fff" fill-opacity="0.4"/><rect x="434" y="59" width="1" height="5" fill="#fff" fill-opacity="0.5"/><rect x="435" y="52" width="1" height="7" fill="#fff" fill-opacity="0.6"/><rect x="437" y="59" width="1" height="5" fill="#fff" fill-opacity="0.3"/><rect x="437" y="50" width="1" height="9" fill="#fff" fill-opacity="0.4"/><rect x="438" y="54" width="1" height="5" fill="#fff" fill-opacity="0.5"/><rect x="439" y="54" width="1" height="5" fill="#fff" fill-opacity="0.4"/><rect x="439" y="46" width="1" height="13" fill="#fff" fill-opacity="0.4"/><rect x="440" y="54" width="1" height="5" fill="#fff" fill-opacity="0.4"/><rect x="441" y="52" width="1" height="7" fill="#fff" fill-opacity="0.4"/><rect x="441" y="44" width="1" height="15" fill="#fff" fill-opacity="0.4"/><rect x="442" y="54" width="1" height="5" fill="#fff" fill-opacity="0.3"/><rect x="442" y="59" width="1" height="5" fill="#fff" fill-opacity="0.4"/><rect x="442" y="59" width="1" height="11" fill="#fff" fill-opacity="0.5"/><rect x="443" y="52" width="1" height="7" fill="#fff" fill-opacity="0.5"/><rect x="443" y="46" width="1" height="13" fill="#fff" fill-opacity="0.4"/><rect x="444" y="52" width="1" height="7" fill="#fff" fill-opacity="0.3"/><rect x="444" y="59" width="1" height="5" fill="#fff" fill-opacity="0.4"/><rect x="445" y="54" width="1" height="5" fill="#fff" fill-opacity="0.5"/><rect x="445" y="59" width="1" height="3" fill="#fff" fill-opacity="0.3"/><rect x="445" y="59" width="1" height="11" fill="#fff" fill-opacity="0.5"/><rect x="446" y="54" width="1" height="5" fill="#fff" fill-opacity="0.5"/><rect x="446" y="59" width="1" height="3" fill="#fff" fill-opacity="0.5"/><rect x="446" y="48" width="1" height="11" fill="#fff" fill-opacity="0.4"/><rect x="447" y="52" width="1" height="7" fill="#fff" fill-opacity="0.5"/><rect x="447" y="59" width="1" height="5" fill="#fff" fill-opacity="0.3"/><rect x="448" y="59" width="1" height="5" fill="#fff" fill-opacity="0.5"/><rect x="450" y="52" width="1" height="7" fill="#fff" fill-opacity="0.4"/><rect x="450" y="59" width="1" height="5" fill="#fff" fill-opacity="0.5"/><rect x="451" y="44" width="1" height="15" fill="#fff" fill-opacity="0.4"/><rect x="453" y="52" width="1" height="7" fill="#fff" fill-opacity="0.4"/><rect x="454" y="54" width="1" height="5" fill="#fff" fill-opacity="0.4"/><rect x="454" y="59" width="1" height="5" fill="#fff" fill-opacity="0.4"/><rect x="455" y="52" width="1" height="7" fill="#fff" fill-opacity="0.6"/><rect x="455" y="59" width="1" height="7" fill="#fff" fill-opacity="0.4"/><rect x="456" y="59" width="1" height="5" fill="#fff" fill-opacity="0.3"/><rect x="457" y="52" width="1" height="7" fill="#fff" fill-opacity="0.6"/><rect x="457" y="59" width="1" height="5" fill="#fff" fill-opacity="0.4"/><rect x="457" y="44" width="1" height="15" fill="#fff" fill-opacity="0.3"/><rect x="459" y="52" width="1" height="7" fill="#fff" fill-opacity="0.6"/><rect x="460" y="54" width="1" height="5" fill="#fff" fill-opacity="0.6"/><rect x="460" y="59" width="1" height="5" fill="#fff" fill-opacity="0.3"/><rect x="461" y="52" width="1" height="7" fill="#fff" fill-opacity="0.5"/><rect x="461" y="59" width="1" height="9" fill="#fff" fill-opacity="0.3"/><rect x="462" y="52" width="1" height="7" fill="#fff" fill-opacity="0.5"/><rect x="463" y="52" width="1" height="7" fill="#fff" fill-opacity="0.4"/><rect x="463" y="59" width="1" height="5" fill="#fff" fill-opacity="0.3"/><rect x="463" y="59" width="1" height="9" fill="#fff" fill-opacity="0.3"/><rect x="464" y="52" width="1" height="7" fill="#fff" fill-opacity="0.3"/><rect x="464" y="59" width="1" height="5" fill="#fff" fill-opacity="0.5"/><rect x="464" y="44" width="1" height="15" fill="#fff" fill-opacity="0.5"/><rect x="465" y="54" width="1" height="5" fill="#fff" fill-opacity="0.3"/><rect x="465" y="59" width="1" height="3" fill="#fff" fill-opacity="0.3"/><rect x="467" y="54" width="1" height="5" fill="#fff" fill-opacity="0.5"/><rect x="467" y="59" width="1" height="5" fill="#fff" fill-opacity="0.3"/><rect x="468" y="52" width="1" height="7" fill="#fff" fill-opacity="0.6"/><rect x="468" y="59" width="1" height="5" fill="#fff" fill-opacity="0.5"/><rect x="469" y="52" width="1" height="7" fill="#fff" fill-opacity="0.5"/><rect x="469" y="46" width="1" height="13" fill="#fff" fill-opacity="0.5"/><rect x="470" y="54" width="1" height="5" fill="#fff" fill-opacity="0.4"/><rect x="470" y="59" width="1" height="5" fill="#fff" fill-opacity="0.4"/><rect x="470" y="46" width="1" height="13" fill="#fff" fill-opacity="0.5"/><rect x="471" y="54" width="1" height="5" fill="#fff" fill-opacity="0.4"/><rect x="471" y="59" width="1" height="5" fill="#fff" fill-opacity="0.4"/><rect x="473" y="52" width="1" height="7" fill="#fff" fill-opacity="0.3"/><rect x="473" y="59" width="1" height="5" fill="#fff" fill-opacity="0.4"/><rect x="475" y="52" width="1" height="7" fill="#fff" fill-opacity="0.4"/><rect x="476" y="54" width="1" height="5" fill="#fff" fill-opacity="0.5"/><rect x="476" y="59" width="1" height="9" fill="#fff" fill-opacity="0.3"/><rect x="477" y="52" width="1" height="7" fill="#fff" fill-opacity="0.6"/><rect x="477" y="50" width="1" height="9" fill="#fff" fill-opacity="0.3"/><rect x="480" y="54" width="1" height="5" fill="#fff" fill-opacity="0.6"/><rect x="480" y="59" width="1" height="5" fill="#fff" fill-opacity="0.3"/><rect x="482" y="52" width="1" height="7" fill="#fff" fill-opacity="0.5"/><rect x="484" y="54" width="1" height="5" fill="#fff" fill-opacity="0.5"/><rect x="485" y="52" width="1" height="7" fill="#fff" fill-opacity="0.6"/><rect x="485" y="59" width="1" height="5" fill="#fff" fill-opacity="0.5"/><rect x="486" y="52" width="1" height="7" fill="#fff" fill-opacity="0.3"/><rect x="486" y="59" width="1" height="11" fill="#fff" fill-opacity="0.5"/><rect x="487" y="54" width="1" height="5" fill="#fff" fill-opacity="0.3"/><rect x="487" y="59" width="1" height="5" fill="#fff" fill-opacity="0.3"/><rect x="488" y="52" width="1" height="7" fill="#fff" fill-opacity="0.5"/><rect x="488" y="59" width="1" height="5" fill="#fff" fill-opacity="0.5"/><rect x="489" y="54" width="1" height="5" fill="#fff" fill-opacity="0.3"/><rect x="489" y="59" width="1" height="5" fill="#fff" fill-opacity="0.5"/><rect x="490" y="52" width="1" height="7" fill="#fff" fill-opacity="0.3"/><rect x="491" y="54" width="1" height="5" fill="#fff" fill-opacity="0.4"/><rect x="492" y="52" width="1" height="7" fill="#fff" fill-opacity="0.4"/><rect x="492" y="59" width="1" height="7" fill="#fff" fill-opacity="0.3"/><rect x="493" y="54" width="1" height="5" fill="#fff" fill-opacity="0.5"/><rect x="493" y="59" width="1" height="7" fill="#fff" fill-opacity="0.4"/><rect x="494" y="52" width="1" height="7" fill="#fff" fill-opacity="0.6"/><rect x="494" y="59" width="1" height="5" fill="#fff" fill-opacity="0.4"/><rect x="496" y="59" width="1" height="7" fill="#fff" fill-opacity="0.3"/><rect x="496" y="46" width="1" height="13" fill="#fff" fill-opacity="0.4"/><rect x="497" y="52" width="1" height="7" fill="#fff" fill-opacity="0.3"/><rect x="497" y="59" width="1" height="7" fill="#fff" fill-opacity="0.3"/><rect x="498" y="52" width="1" height="7" fill="#fff" fill-opacity="0.6"/><rect x="498" y="48" width="1" height="11" fill="#fff" fill-opacity="0.4"/><rect x="501" y="54" width="1" height="5" fill="#fff" fill-opacity="0.5"/><rect x="502" y="59" width="1" height="9" fill="#fff" fill-opacity="0.5"/><rect x="503" y="52" width="1" height="7" fill="#fff" fill-opacity="0.5"/><rect x="503" y="59" width="1" height="5" fill="#fff" fill-opacity="0.4"/><rect x="504" y="54" width="1" height="5" fill="#fff" fill-opacity="0.5"/><rect x="504" y="59" width="1" height="5" fill="#fff" fill-opacity="0.5"/><rect x="505" y="52" width="1" height="7" fill="#fff" fill-opacity="0.3"/><rect x="505" y="46" width="1" height="13" fill="#fff" fill-opacity="0.5"/><rect x="506" y="54" width="1" height="5" fill="#fff" fill-opacity="0.3"/><rect x="506" y="59" width="1" height="7" fill="#fff" fill-opacity="0.3"/><rect x="507" y="52" width="1" height="7" fill="#fff" fill-opacity="0.6"/><rect x="507" y="48" width="1" height="11" fill="#fff" fill-opacity="0.3"/><rect x="508" y="52" width="1" height="7" fill="#fff" fill-opacity="0.4"/><rect x="508" y="59" width="1" height="5" fill="#fff" fill-opacity="0.3"/><rect x="508" y="59" width="1" height="9" fill="#fff" fill-opacity="0.4"/><rect x="509" y="52" width="1" height="7" fill="#fff" fill-opacity="0.5"/><rect x="509" y="59" width="1" height="5" fill="#fff" fill-opacity="0.3"/><rect x="509" y="48" width="1" height="11" fill="#fff" fill-opacity="0.4"/><rect x="511" y="52" width="1" height="7" fill="#fff" fill-opacity="0.6"/><rect x="511" y="59" width="1" height="5" fill="#fff" fill-opacity="0.3"/><rect x="511" y="59" width="1" height="11" fill="#fff" fill-opacity="0.4"/><rect x="512" y="52" width="1" height="7" fill="#fff" fill-opacity="0.3"/><rect x="513" y="52" width="1" height="7" fill="#fff" fill-opacity="0.4"/><rect x="514" y="52" width="1" height="7" fill="#fff" fill-opacity="0.6"/><rect x="515" y="52" width="1" height="7" fill="#fff" fill-opacity="0.3"/><rect x="516" y="52" width="1" height="7" fill="#fff" fill-opacity="0.3"/><rect x="516" y="59" width="1" height="5" fill="#fff" fill-opacity="0.3"/><rect x="516" y="59" width="1" height="7" fill="#fff" fill-opacity="0.3"/><rect x="517" y="52" width="1" height="7" fill="#fff" fill-opacity="0.3"/><rect x="517" y="59" width="1" height="7" fill="#fff" fill-opacity="0.3"/><rect x="517" y="46" width="1" height="13" fill="#fff" fill-opacity="0.5"/><rect x="518" y="52" width="1" height="7" fill="#fff" fill-opacity="0.6"/><rect x="518" y="59" width="1" height="7" fill="#fff" fill-opacity="0.4"/><rect x="519" y="50" width="1" height="9" fill="#fff" fill-opacity="0.4"/><rect x="519" y="42" width="1" height="17" fill="#fff" fill-opacity="0.3"/><rect x="520" y="50" width="1" height="9" fill="#fff" fill-opacity="0.5"/><rect x="521" y="59" width="1" height="5" fill="#fff" fill-opacity="0.3"/><rect x="521" y="44" width="1" height="15" fill="#fff" fill-opacity="0.4"/><rect x="523" y="50" width="1" height="9" fill="#fff" fill-opacity="0.5"/><rect x="525" y="52" width="1" height="7" fill="#fff" fill-opacity="0.6"/><rect x="526" y="50" width="1" height="9" fill="#fff" fill-opacity="0.3"/><rect x="527" y="52" width="1" height="7" fill="#fff" fill-opacity="0.6"/><rect x="527" y="59" width="1" height="5" fill="#fff" fill-opacity="0.4"/><rect x="528" y="52" width="1" height="7" fill="#fff" fill-opacity="0.3"/><rect x="529" y="52" width="1" height="7" fill="#fff" fill-opacity="0.6"/><rect x="529" y="59" width="1" height="7" fill="#fff" fill-opacity="0.5"/><rect x="529" y="59" width="1" height="11" fill="#fff" fill-opacity="0.4"/><rect x="530" y="52" width="1" height="7" fill="#fff" fill-opacity="0.5"/><rect x="530" y="59" width="1" height="7" fill="#fff" fill-opacity="0.4"/><rect x="531" y="52" width="1" height="7" fill="#fff" fill-opacity="0.5"/><rect x="531" y="59" width="1" height="5" fill="#fff" fill-opacity="0.5"/><rect x="532" y="52" width="1" height="7" fill="#fff" fill-opacity="0.5"/><rect x="532" y="59" width="1" height="5" fill="#fff" fill-opacity="0.3"/><rect x="533" y="50" width="1" height="9" fill="#fff" fill-opacity="0.3"/><rect x="533" y="59" width="1" height="7" fill="#fff" fill-opacity="0.5"/><rect x="534" y="52" width="1" height="7" fill="#fff" fill-opacity="0.6"/><rect x="534" y="59" width="1" height="5" fill="#fff" fill-opacity="0.5"/><rect x="535" y="59" width="1" height="7" fill="#fff" fill-opacity="0.5"/><rect x="536" y="52" width="1" height="7" fill="#fff" fill-opacity="0.4"/><rect x="536" y="59" width="1" height="5" fill="#fff" fill-opacity="0.3"/><rect x="537" y="59" width="1" height="5" fill="#fff" fill-opacity="0.5"/><rect x="537" y="46" width="1" height="13" fill="#fff" fill-opacity="0.3"/><rect x="538" y="52" width="1" height="7" fill="#fff" fill-opacity="0.6"/><rect x="538" y="59" width="1" height="7" fill="#fff" fill-opacity="0.3"/><rect x="541" y="50" width="1" height="9" fill="#fff" fill-opacity="0.6"/><rect x="543" y="50" width="1" height="9" fill="#fff" fill-opacity="0.5"/><rect x="543" y="59" width="1" height="5" fill="#fff" fill-opacity="0.4"/><rect x="543" y="48" width="1" height="11" fill="#fff" fill-opacity="0.5"/><rect x="544" y="52" width="1" height="7" fill="#fff" fill-opacity="0.6"/><rect x="544" y="59" width="1" height="9" fill="#fff" fill-opacity="0.4"/><rect x="545" y="52" width="1" height="7" fill="#fff" fill-opacity="0.6"/><rect x="547" y="52" width="1" height="7" fill="#fff" fill-opacity="0.3"/><rect x="547" y="46" width="1" height="13" fill="#fff" fill-opacity="0.4"/><rect x="548" y="52" width="1" height="7" fill="#fff" fill-opacity="0.6"/><rect x="549" y="54" width="1" height="5" fill="#fff" fill-opacity="0.5"/><rect x="549" y="59" width="1" height="9" fill="#fff" fill-opacity="0.4"/><rect x="551" y="50" width="1" height="9" fill="#fff" fill-opacity="0.5"/><rect x="551" y="59" width="1" height="7" fill="#fff" fill-opacity="0.3"/><rect x="552" y="52" width="1" height="7" fill="#fff" fill-opacity="0.5"/><rect x="552" y="59" width="1" height="5" fill="#fff" fill-opacity="0.3"/><rect x="553" y="52" width="1" height="7" fill="#fff" fill-opacity="0.5"/><rect x="553" y="59" width="1" height="7" fill="#fff" fill-opacity="0.5"/><rect x="554" y="52" width="1" height="7" fill="#fff" fill-opacity="0.3"/><rect x="555" y="52" width="1" height="7" fill="#fff" fill-opacity="0.3"/><rect x="556" y="50" width="1" height="9" fill="#fff" fill-opacity="0.4"/><rect x="556" y="59" width="1" height="5" fill="#fff" fill-opacity="0.3"/><rect x="556" y="59" width="1" height="11" fill="#fff" fill-opacity="0.5"/><rect x="557" y="52" width="1" height="7" fill="#fff" fill-opacity="0.6"/><rect x="557" y="59" width="1" height="11" fill="#fff" fill-opacity="0.3"/><rect x="558" y="50" width="1" height="9" fill="#fff" fill-opacity="0.4"/><rect x="559" y="52" width="1" height="7" fill="#fff" fill-opacity="0.5"/><rect x="559" y="59" width="1" height="5" fill="#fff" fill-opacity="0.3"/><rect x="560" y="52" width="1" height="7" fill="#fff" fill-opacity="0.4"/><rect x="560" y="59" width="1" height="7" fill="#fff" fill-opacity="0.3"/><rect x="560" y="44" width="1" height="15" fill="#fff" fill-opacity="0.3"/><rect x="561" y="50" width="1" height="9" fill="#fff" fill-opacity="0.4"/><rect x="561" y="46" width="1" height="13" fill="#fff" fill-opacity="0.3"/><rect x="562" y="52" width="1" height="7" fill="#fff" fill-opacity="0.4"/><rect x="562" y="59" width="1" height="11" fill="#fff" fill-opacity="0.5"/><rect x="563" y="52" width="1" height="7" fill="#fff" fill-opacity="0.4"/><rect x="564" y="52" width="1" height="7" fill="#fff" fill-opacity="0.5"/><rect x="564" y="44" width="1" height="15" fill="#fff" fill-opacity="0.5"/><rect x="565" y="50" width="1" height="9" fill="#fff" fill-opacity="0.3"/><rect x="566" y="50" width="1" height="9" fill="#fff" fill-opacity="0.6"/><rect x="567" y="52" width="1" height="7" fill="#fff" fill-opacity="0.6"/><rect x="567" y="59" width="1" height="9" fill="#fff" fill-opacity="0.4"/><rect x="568" y="52" width="1" height="7" fill="#fff" fill-opacity="0.6"/><rect x="569" y="50" width="1" height="9" fill="#fff" fill-opacity="0.6"/><rect x="569" y="59" width="1" height="7" fill="#fff" fill-opacity="0.3"/><rect x="570" y="52" width="1" height="7" fill="#fff" fill-opacity="0.3"/><rect x="570" y="42" width="1" height="17" fill="#fff" fill-opacity="0.3"/><rect x="571" y="52" width="1" height="7" fill="#fff" fill-opacity="0.3"/><rect x="572" y="50" width="1" height="9" fill="#fff" fill-opacity="0.6"/><rect x="572" y="59" width="1" height="5" fill="#fff" fill-opacity="0.3"/><rect x="573" y="52" width="1" height="7" fill="#fff" fill-opacity="0.5"/><rect x="574" y="50" width="1" height="9" fill="#fff" fill-opacity="0.5"/><rect x="574" y="59" width="1" height="7" fill="#fff" fill-opacity="0.4"/><rect x="575" y="50" width="1" height="9" fill="#fff" fill-opacity="0.6"/><rect x="577" y="50" width="1" height="9" fill="#fff" fill-opacity="0.5"/><rect x="577" y="59" width="1" height="5" fill="#fff" fill-opacity="0.3"/><rect x="578" y="52" width="1" height="7" fill="#fff" fill-opacity="0.3"/><rect x="578" y="59" width="1" height="7" fill="#fff" fill-opacity="0.4"/><rect x="578" y="46" width="1" height="13" fill="#fff" fill-opacity="0.3"/><rect x="579" y="50" width="1" height="9" fill="#fff" fill-opacity="0.4"/><rect x="580" y="46" width="1" height="13" fill="#fff" fill-opacity="0.5"/><rect x="581" y="59" width="1" height="5" fill="#fff" fill-opacity="0.3"/><rect x="581" y="48" width="1" height="11" fill="#fff" fill-opacity="0.4"/><rect x="582" y="50" width="1" height="9" fill="#fff" fill-opacity="0.3"/><rect x="582" y="50" width="1" height="9" fill="#fff" fill-opacity="0.5"/><rect x="583" y="46" width="1" height="13" fill="#fff" fill-opacity="0.5"/><rect x="584" y="52" width="1" height="7" fill="#fff" fill-opacity="0.5"/><rect x="584" y="44" width="1" height="15" fill="#fff" fill-opacity="0.4"/><rect x="585" y="50" width="1" height="9" fill="#fff" fill-opacity="0.4"/><rect x="585" y="46" width="1" height="13" fill="#fff" fill-opacity="0.5"/><rect x="586" y="50" width="1" height="9" fill="#fff" fill-opacity="0.5"/><rect x="586" y="59" width="1" height="7" fill="#fff" fill-opacity="0.5"/><rect x="586" y="42" width="1" height="17" fill="#fff" fill-opacity="0.4"/><rect x="587" y="50" width="1" height="9" fill="#fff" fill-opacity="0.3"/><rect x="587" y="59" width="1" height="5" fill="#fff" fill-opacity="0.4"/><rect x="588" y="50" width="1" height="9" fill="#fff" fill-opacity="0.5"/><rect x="588" y="59" width="1" height="7" fill="#fff" fill-opacity="0.4"/><rect x="588" y="46" width="1" height="13" fill="#fff" fill-opacity="0.4"/><rect x="590" y="50" width="1" height="9" fill="#fff" fill-opacity="0.3"/><rect x="590" y="59" width="1" height="5" fill="#fff" fill-opacity="0.3"/><rect x="591" y="52" width="1" height="7" fill="#fff" fill-opacity="0.4"/><rect x="592" y="52" width="1" height="7" fill="#fff" fill-opacity="0.5"/><rect x="592" y="48" width="1" height="11" fill="#fff" fill-opacity="0.3"/><rect x="593" y="52" width="1" height="7" fill="#fff" fill-opacity="0.4"/><rect x="593" y="59" width="1" height="9" fill="#fff" fill-opacity="0.5"/><rect x="594" y="52" width="1" height="7" fill="#fff" fill-opacity="0.5"/><rect x="594" y="44" width="1" height="15" fill="#fff" fill-opacity="0.4"/><rect x="595" y="59" width="1" height="7" fill="#fff" fill-opacity="0.4"/><rect x="596" y="52" width="1" height="7" fill="#fff" fill-opacity="0.4"/><rect x="597" y="52" width="1" height="7" fill="#fff" fill-opacity="0.4"/><rect x="597" y="59" width="1" height="7" fill="#fff" fill-opacity="0.4"/><rect x="598" y="52" width="1" height="7" fill="#fff" fill-opacity="0.3"/><rect x="598" y="59" width="1" height="7" fill="#fff" fill-opacity="0.3"/><rect x="598" y="44" width="1" height="15" fill="#fff" fill-opacity="0.4"/><rect x="599" y="50" width="1" height="9" fill="#fff" fill-opacity="0.6"/><rect x="599" y="59" width="1" height="7" fill="#fff" fill-opacity="0.3"/><rect x="601" y="52" width="1" height="7" fill="#fff" fill-opacity="0.5"/><rect x="603" y="52" width="1" height="7" fill="#fff" fill-opacity="0.3"/><rect x="603" y="44" width="1" height="15" fill="#fff" fill-opacity="0.3"/><rect x="604" y="59" width="1" height="5" fill="#fff" fill-opacity="0.5"/><rect x="604" y="42" width="1" height="17" fill="#fff" fill-opacity="0.4"/><rect x="605" y="52" width="1" height="7" fill="#fff" fill-opacity="0.5"/><rect x="605" y="59" width="1" height="7" fill="#fff" fill-opacity="0.4"/><rect x="606" y="59" width="1" height="5" fill="#fff" fill-opacity="0.3"/><rect x="607" y="50" width="1" height="9" fill="#fff" fill-opacity="0.3"/><rect x="608" y="52" width="1" height="7" fill="#fff" fill-opacity="0.6"/><rect x="609" y="50" width="1" height="9" fill="#fff" fill-opacity="0.6"/><rect x="609" y="59" width="1" height="7" fill="#fff" fill-opacity="0.4"/><rect x="609" y="59" width="1" height="11" fill="#fff" fill-opacity="0.5"/><rect x="610" y="52" width="1" height="7" fill="#fff" fill-opacity="0.3"/><rect x="612" y="52" width="1" height="7" fill="#fff" fill-opacity="0.6"/><rect x="612" y="59" width="1" height="7" fill="#fff" fill-opacity="0.3"/><rect x="613" y="50" width="1" height="9" fill="#fff" fill-opacity="0.4"/><rect x="614" y="52" width="1" height="7" fill="#fff" fill-opacity="0.3"/><rect x="614" y="59" width="1" height="7" fill="#fff" fill-opacity="0.3"/><rect x="615" y="50" width="1" height="9" fill="#fff" fill-opacity="0.4"/><rect x="615" y="59" width="1" height="7" fill="#fff" fill-opacity="0.3"/><rect x="615" y="59" width="1" height="9" fill="#fff" fill-opacity="0.3"/><rect x="616" y="52" width="1" height="7" fill="#fff" fill-opacity="0.3"/><rect x="616" y="59" width="1" height="7" fill="#fff" fill-opacity="0.4"/><rect x="617" y="52" width="1" height="7" fill="#fff" fill-opacity="0.5"/><rect x="617" y="59" width="1" height="5" fill="#fff" fill-opacity="0.3"/><rect x="617" y="59" width="1" height="7" fill="#fff" fill-opacity="0.3"/><rect x="618" y="59" width="1" height="5" fill="#fff" fill-opacity="0.5"/><rect x="618" y="48" width="1" height="11" fill="#fff" fill-opacity="0.4"/><rect x="619" y="52" width="1" height="7" fill="#fff" fill-opacity="0.3"/><rect x="619" y="59" width="1" height="5" fill="#fff" fill-opacity="0.5"/><rect x="620" y="59" width="1" height="5" fill="#fff" fill-opacity="0.4"/><rect x="620" y="59" width="1" height="11" fill="#fff" fill-opacity="0.3"/><rect x="621" y="52" width="1" height="7" fill="#fff" fill-opacity="0.3"/><rect x="621" y="59" width="1" height="5" fill="#fff" fill-opacity="0.3"/><rect x="621" y="59" width="1" height="11" fill="#fff" fill-opacity="0.4"/><rect x="622" y="52" width="1" height="7" fill="#fff" fill-opacity="0.5"/><rect x="623" y="52" width="1" height="7" fill="#fff" fill-opacity="0.6"/><rect x="624" y="52" width="1" height="7" fill="#fff" fill-opacity="0.4"/><rect x="624" y="59" width="1" height="5" fill="#fff" fill-opacity="0.4"/><rect x="624" y="42" width="1" height="17" fill="#fff" fill-opacity="0.3"/><rect x="625" y="59" width="1" height="7" fill="#fff" fill-opacity="0.5"/><rect x="626" y="52" width="1" height="7" fill="#fff" fill-opacity="0.6"/><rect x="626" y="46" width="1" height="13" fill="#fff" fill-opacity="0.5"/><rect x="627" y="52" width="1" height="7" fill="#fff" fill-opacity="0.5"/><rect x="628" y="52" width="1" height="7" fill="#fff" fill-opacity="0.3"/><rect x="628" y="59" width="1" height="5" fill="#fff" fill-opacity="0.5"/><rect x="628" y="59" width="1" height="11" fill="#fff" fill-opacity="0.5"/><rect x="629" y="52" width="1" height="7" fill="#fff" fill-opacity="0.4"/><rect x="629" y="59" width="1" height="11" fill="#fff" fill-opacity="0.5"/><rect x="630" y="50" width="1" height="9" fill="#fff" fill-opacity="0.3"/><rect x="631" y="52" width="1" height="7" fill="#fff" fill-opacity="0.3"/><rect x="632" y="59" width="1" height="7" fill="#fff" fill-opacity="0.5"/><rect x="632" y="46" width="1" height="13" fill="#fff" fill-opacity="0.4"/><rect x="633" y="52" width="1" height="7" fill="#fff" fill-opacity="0.3"/><rect x="633" y="59" width="1" height="7" fill="#fff" fill-opacity="0.5"/><rect x="637" y="52" width="1" height="7" fill="#fff" fill-opacity="0.4"/><rect x="637" y="59" width="1" height="7" fill="#fff" fill-opacity="0.5"/><rect x="638" y="52" width="1" height="7" fill="#fff" fill-opacity="0.5"/><rect x="638" y="44" width="1" height="15" fill="#fff" fill-opacity="0.3"/><rect x="639" y="59" width="1" height="5" fill="#fff" fill-opacity="0.5"/><rect x="639" y="46" width="1" height="13" fill="#fff" fill-opacity="0.3"/><rect x="641" y="52" width="1" height="7" fill="#fff" fill-opacity="0.6"/><rect x="643" y="52" width="1" height="7" fill="#fff" fill-opacity="0.6"/><rect x="643" y="59" width="1" height="5" fill="#fff" fill-opacity="0.4"/><rect x="644" y="54" width="1" height="5" fill="#fff" fill-opacity="0.5"/><rect x="645" y="54" width="1" height="5" fill="#fff" fill-opacity="0.6"/><rect x="646" y="52" width="1" height="7" fill="#fff" fill-opacity="0.3"/><rect x="646" y="59" width="1" height="7" fill="#fff" fill-opacity="0.3"/><rect x="647" y="54" width="1" height="5" fill="#fff" fill-opacity="0.6"/><rect x="647" y="59" width="1" height="5" fill="#fff" fill-opacity="0.4"/><rect x="647" y="50" width="1" height="9" fill="#fff" fill-opacity="0.3"/><rect x="648" y="54" width="1" height="5" fill="#fff" fill-opacity="0.5"/><rect x="649" y="52" width="1" height="7" fill="#fff" fill-opacity="0.4"/><rect x="649" y="59" width="1" height="9" fill="#fff" fill-opacity="0.5"/><rect x="650" y="54" width="1" height="5" fill="#fff" fill-opacity="0.3"/><rect x="650" y="46" width="1" height="13" fill="#fff" fill-opacity="0.4"/><rect x="651" y="54" width="1" height="5" fill="#fff" fill-opacity="0.6"/><rect x="651" y="59" width="1" height="5" fill="#fff" fill-opacity="0.4"/><rect x="651" y="48" width="1" height="11" fill="#fff" fill-opacity="0.4"/><rect x="652" y="54" width="1" height="5" fill="#fff" fill-opacity="0.3"/><rect x="652" y="59" width="1" height="5" fill="#fff" fill-opacity="0.4"/><rect x="653" y="59" width="1" height="5" fill="#fff" fill-opacity="0.3"/><rect x="653" y="46" width="1" height="13" fill="#fff" fill-opacity="0.5"/><rect x="654" y="52" width="1" height="7" fill="#fff" fill-opacity="0.4"/><rect x="654" y="59" width="1" height="5" fill="#fff" fill-opacity="0.5"/><rect x="655" y="52" width="1" height="7" fill="#fff" fill-opacity="0.3"/><rect x="656" y="54" width="1" height="5" fill="#fff" fill-opacity="0.3"/><rect x="656" y="59" width="1" height="5" fill="#fff" fill-opacity="0.5"/><rect x="657" y="54" width="1" height="5" fill="#fff" fill-opacity="0.6"/><rect x="657" y="59" width="1" height="5" fill="#fff" fill-opacity="0.3"/><rect x="658" y="54" width="1" height="5" fill="#fff" fill-opacity="0.3"/><rect x="659" y="54" width="1" height="5" fill="#fff" fill-opacity="0.4"/><rect x="659" y="59" width="1" height="5" fill="#fff" fill-opacity="0.5"/><rect x="659" y="46" width="1" height="13" fill="#fff" fill-opacity="0.4"/><rect x="660" y="54" width="1" height="5" fill="#fff" fill-opacity="0.6"/><rect x="661" y="54" width="1" height="5" fill="#fff" fill-opacity="0.6"/><rect x="661" y="59" width="1" height="5" fill="#fff" fill-opacity="0.5"/><rect x="662" y="54" width="1" height="5" fill="#fff" fill-opacity="0.6"/><rect x="663" y="54" width="1" height="5" fill="#fff" fill-opacity="0.5"/><rect x="663" y="59" width="1" height="7" fill="#fff" fill-opacity="0.3"/><rect x="664" y="54" width="1" height="5" fill="#fff" fill-opacity="0.5"/><rect x="664" y="59" width="1" height="5" fill="#fff" fill-opacity="0.4"/><rect x="665" y="52" width="1" height="7" fill="#fff" fill-opacity="0.4"/><rect x="665" y="48" width="1" height="11" fill="#fff" fill-opacity="0.5"/><rect x="666" y="54" width="1" height="5" fill="#fff" fill-opacity="0.3"/><rect x="667" y="54" width="1" height="5" fill="#fff" fill-opacity="0.4"/><rect x="668" y="59" width="1" height="5" fill="#fff" fill-opacity="0.3"/><rect x="669" y="54" width="1" height="5" fill="#fff" fill-opacity="0.6"/><rect x="669" y="59" width="1" height="5" fill="#fff" fill-opacity="0.4"/><rect x="669" y="52" width="1" height="7" fill="#fff" fill-opacity="0.5"/><rect x="670" y="52" width="1" height="7" fill="#fff" fill-opacity="0.3"/><rect x="671" y="54" width="1" height="5" fill="#fff" fill-opacity="0.5"/><rect x="672" y="54" width="1" height="5" fill="#fff" fill-opacity="0.3"/><rect x="672" y="46" width="1" height="13" fill="#fff" fill-opacity="0.4"/><rect x="673" y="52" width="1" height="7" fill="#fff" fill-opacity="0.4"/><rect x="673" y="59" width="1" height="5" fill="#fff" fill-opacity="0.5"/><rect x="673" y="59" width="1" height="9" fill="#fff" fill-opacity="0.5"/><rect x="674" y="52" width="1" height="7" fill="#fff" fill-opacity="0.3"/><rect x="674" y="59" width="1" height="5" fill="#fff" fill-opacity="0.5"/><rect x="674" y="52" width="1" height="7" fill="#fff" fill-opacity="0.4"/><rect x="675" y="54" width="1" height="5" fill="#fff" fill-opacity="0.4"/><rect x="677" y="56" width="1" height="3" fill="#fff" fill-opacity="0.6"/><rect x="677" y="59" width="1" height="7" fill="#fff" fill-opacity="0.5"/><rect x="678" y="59" width="1" height="7" fill="#fff" fill-opacity="0.5"/><rect x="679" y="54" width="1" height="5" fill="#fff" fill-opacity="0.6"/><rect x="679" y="59" width="1" height="5" fill="#fff" fill-opacity="0.5"/><rect x="679" y="59" width="1" height="11" fill="#fff" fill-opacity="0.3"/><rect x="680" y="56" width="1" height="3" fill="#fff" fill-opacity="0.4"/><rect x="685" y="56" width="1" height="3" fill="#fff" fill-opacity="0.4"/><rect x="685" y="59" width="1" height="7" fill="#fff" fill-opacity="0.4"/><rect x="685" y="59" width="1" height="13" fill="#fff" fill-opacity="0.4"/><rect x="686" y="59" width="1" height="5" fill="#fff" fill-opacity="0.5"/><rect x="686" y="59" width="1" height="9" fill="#fff" fill-opacity="0.3"/><rect x="688" y="56" width="1" height="3" fill="#fff" fill-opacity="0.4"/><rect x="688" y="59" width="1" height="7" fill="#fff" fill-opacity="0.3"/><rect x="689" y="56" width="1" height="3" fill="#fff" fill-opacity="0.3"/><rect x="689" y="59" width="1" height="7" fill="#fff" fill-opacity="0.4"/><rect x="690" y="56" width="1" height="3" fill="#fff" fill-opacity="0.4"/><rect x="690" y="59" width="1" height="5" fill="#fff" fill-opacity="0.3"/><rect x="691" y="52" width="1" height="7" fill="#fff" fill-opacity="0.5"/><rect x="692" y="54" width="1" height="5" fill="#fff" fill-opacity="0.4"/><rect x="692" y="59" width="1" height="7" fill="#fff" fill-opacity="0.4"/><rect x="693" y="56" width="1" height="3" fill="#fff" fill-opacity="0.6"/><rect x="693" y="59" width="1" height="7" fill="#fff" fill-opacity="0.4"/><rect x="694" y="59" width="1" height="5" fill="#fff" fill-opacity="0.4"/><rect x="694" y="59" width="1" height="13" fill="#fff" fill-opacity="0.4"/><rect x="695" y="54" width="1" height="5" fill="#fff" fill-opacity="0.5"/><rect x="695" y="59" width="1" height="7" fill="#fff" fill-opacity="0.4"/><rect x="696" y="56" width="1" height="3" fill="#fff" fill-opacity="0.6"/><rect x="698" y="56" width="1" height="3" fill="#fff" fill-opacity="0.6"/><rect x="698" y="59" width="1" height="7" fill="#fff" fill-opacity="0.3"/><rect x="698" y="59" width="1" height="7" fill="#fff" fill-opacity="0.5"/><rect x="700" y="56" width="1" height="3" fill="#fff" fill-opacity="0.5"/><rect x="700" y="59" width="1" height="7" fill="#fff" fill-opacity="0.4"/><rect x="700" y="50" width="1" height="9" fill="#fff" fill-opacity="0.4"/><rect x="701" y="56" width="1" height="3" fill="#fff" fill-opacity="0.3"/><rect x="701" y="59" width="1" height="5" fill="#fff" fill-opacity="0.3"/><rect x="702" y="59" width="1" height="5" fill="#fff" fill-opacity="0.3"/><rect x="703" y="59" width="1" height="5" fill="#fff" fill-opacity="0.4"/><rect x="705" y="56" width="1" height="3" fill="#fff" fill-opacity="0.3"/><rect x="705" y="59" width="1" height="7" fill="#fff" fill-opacity="0.3"/><rect x="706" y="59" width="1" height="7" fill="#fff" fill-opacity="0.5"/><rect x="707" y="59" width="1" height="7" fill="#fff" fill-opacity="0.3"/><rect x="707" y="59" width="1" height="15" fill="#fff" fill-opacity="0.4"/><rect x="708" y="59" width="1" height="5" fill="#fff" fill-opacity="0.4"/><rect x="710" y="59" width="1" height="7" fill="#fff" fill-opacity="0.3"/><rect x="711" y="59" width="1" height="7" fill="#fff" fill-opacity="0.4"/><rect x="712" y="56" width="1" height="3" fill="#fff" fill-opacity="0.4"/><rect x="712" y="59" width="1" height="7" fill="#fff" fill-opacity="0.5"/><rect x="714" y="59" width="1" height="7" fill="#fff" fill-opacity="0.3"/><rect x="715" y="56" width="1" height="3" fill="#fff" fill-opacity="0.5"/><rect x="715" y="59" width="1" height="5" fill="#fff" fill-opacity="0.4"/><rect x="716" y="56" width="1" height="3" fill="#fff" fill-opacity="0.4"/><rect x="717" y="59" width="1" height="7" fill="#fff" fill-opacity="0.4"/><rect x="718" y="56" width="1" height="3" fill="#fff" fill-opacity="0.6"/><rect x="718" y="59" width="1" height="7" fill="#fff" fill-opacity="0.5"/><rect x="719" y="54" width="1" height="5" fill="#fff" fill-opacity="0.3"/><rect x="719" y="59" width="1" height="5" fill="#fff" fill-opacity="0.4"/><rect x="720" y="59" width="1" height="7" fill="#fff" fill-opacity="0.3"/><rect x="720" y="59" width="1" height="15" fill="#fff" fill-opacity="0.5"/><rect x="721" y="56" width="1" height="3" fill="#fff" fill-opacity="0.6"/><rect x="723" y="59" width="1" height="7" fill="#fff" fill-opacity="0.5"/><rect x="724" y="54" width="1" height="5" fill="#fff" fill-opacity="0.5"/><rect x="724" y="59" width="1" height="7" fill="#fff" fill-opacity="0.3"/><rect x="724" y="50" width="1" height="9" fill="#fff" fill-opacity="0.5"/><rect x="725" y="59" width="1" height="7" fill="#fff" fill-opacity="0.4"/><rect x="725" y="59" width="1" height="13" fill="#fff" fill-opacity="0.4"/><rect x="726" y="59" width="1" height="7" fill="#fff" fill-opacity="0.5"/><rect x="727" y="59" width="1" height="7" fill="#fff" fill-opacity="0.3"/><rect x="728" y="56" width="1" height="3" fill="#fff" fill-opacity="0.4"/><rect x="728" y="59" width="1" height="7" fill="#fff" fill-opacity="0.4"/><rect x="728" y="59" width="1" height="15" fill="#fff" fill-opacity="0.5"/><rect x="729" y="56" width="1" height="3" fill="#fff" fill-opacity="0.6"/><rect x="729" y="59" width="1" height="7" fill="#fff" fill-opacity="0.3"/><rect x="731" y="59" width="1" height="5" fill="#fff" fill-opacity="0.4"/><rect x="731" y="59" width="1" height="15" fill="#fff" fill-opacity="0.5"/><rect x="732" y="59" width="1" height="7" fill="#fff" fill-opacity="0.5"/><rect x="732" y="50" width="1" height="9" fill="#fff" fill-opacity="0.4"/><rect x="733" y="54" width="1" height="5" fill="#fff" fill-opacity="0.6"/><rect x="733" y="59" width="1" height="7" fill="#fff" fill-opacity="0.5"/><rect x="733" y="52" width="1" height="7" fill="#fff" fill-opacity="0.3"/><rect x="734" y="56" width="1" height="3" fill="#fff" fill-opacity="0.5"/><rect x="734" y="59" width="1" height="7" fill="#fff" fill-opacity="0.4"/><rect x="734" y="59" width="1" height="11" fill="#fff" fill-opacity="0.5"/><rect x="736" y="56" width="1" height="3" fill="#fff" fill-opacity="0.5"/><rect x="736" y="59" width="1" height="7" fill="#fff" fill-opacity="0.3"/><rect x="738" y="59" width="1" height="7" fill="#fff" fill-opacity="0.4"/><rect x="738" y="54" width="1" height="5" fill="#fff" fill-opacity="0.4"/><rect x="739" y="56" width="1" height="3" fill="#fff" fill-opacity="0.5"/><rect x="739" y="59" width="1" height="7" fill="#fff" fill-opacity="0.4"/><rect x="742" y="56" width="1" height="3" fill="#fff" fill-opacity="0.6"/><rect x="742" y="59" width="1" height="7" fill="#fff" fill-opacity="0.5"/><rect x="742" y="59" width="1" height="11" fill="#fff" fill-opacity="0.4"/><rect x="743" y="59" width="1" height="7" fill="#fff" fill-opacity="0.3"/><rect x="744" y="56" width="1" height="3" fill="#fff" fill-opacity="0.5"/><rect x="744" y="59" width="1" height="7" fill="#fff" fill-opacity="0.3"/><rect x="745" y="56" width="1" height="3" fill="#fff" fill-opacity="0.5"/><rect x="745" y="59" width="1" height="7" fill="#fff" fill-opacity="0.4"/><rect x="747" y="59" width="1" height="7" fill="#fff" fill-opacity="0.5"/><rect x="747" y="48" width="1" height="11" fill="#fff" fill-opacity="0.4"/><rect x="748" y="59" width="1" height="7" fill="#fff" fill-opacity="0.4"/><rect x="749" y="59" width="1" height="7" fill="#fff" fill-opacity="0.5"/><rect x="749" y="48" width="1" height="11" fill="#fff" fill-opacity="0.5"/><rect x="750" y="54" width="1" height="5" fill="#fff" fill-opacity="0.5"/><rect x="750" y="59" width="1" height="7" fill="#fff" fill-opacity="0.3"/><rect x="754" y="54" width="1" height="5" fill="#fff" fill-opacity="0.4"/><rect x="755" y="57" width="1" height="2" fill="#fff" fill-opacity="0.5"/><rect x="757" y="59" width="1" height="3" fill="#fff" fill-opacity="0.3"/><rect x="758" y="59" width="1" height="3" fill="#fff" fill-opacity="0.5"/><rect x="759" y="59" width="1" height="3" fill="#fff" fill-opacity="0.4"/><rect x="760" y="56" width="1" height="3" fill="#fff" fill-opacity="0.6"/><rect x="760" y="59" width="1" height="3" fill="#fff" fill-opacity="0.3"/><rect x="762" y="57" width="1" height="2" fill="#fff" fill-opacity="0.3"/><rect x="762" y="59" width="1" height="3" fill="#fff" fill-opacity="0.3"/><rect x="762" y="54" width="1" height="5" fill="#fff" fill-opacity="0.5"/><rect x="765" y="59" width="1" height="3" fill="#fff" fill-opacity="0.4"/><rect x="768" y="52" width="1" height="7" fill="#fff" fill-opacity="0.5"/><rect x="769" y="57" width="1" height="2" fill="#fff" fill-opacity="0.5"/><rect x="769" y="59" width="1" height="3" fill="#fff" fill-opacity="0.3"/><rect x="770" y="59" width="1" height="7" fill="#fff" fill-opacity="0.3"/><rect x="771" y="59" width="1" height="3" fill="#fff" fill-opacity="0.4"/><rect x="773" y="59" width="1" height="3" fill="#fff" fill-opacity="0.3"/><rect x="774" y="57" width="1" height="2" fill="#fff" fill-opacity="0.4"/><rect x="774" y="59" width="1" height="7" fill="#fff" fill-opacity="0.3"/><rect x="774" y="59" width="1" height="15" fill="#fff" fill-opacity="0.5"/><rect x="775" y="57" width="1" height="2" fill="#fff" fill-opacity="0.6"/><rect x="775" y="59" width="1" height="7" fill="#fff" fill-opacity="0.3"/><rect x="775" y="54" width="1" height="5" fill="#fff" fill-opacity="0.4"/><rect x="776" y="59" width="1" height="7" fill="#fff" fill-opacity="0.5"/><rect x="777" y="57" width="1" height="2" fill="#fff" fill-opacity="0.5"/><rect x="777" y="59" width="1" height="9" fill="#fff" fill-opacity="0.5"/><rect x="777" y="59" width="1" height="15" fill="#fff" fill-opacity="0.4"/><rect x="778" y="56" width="1" height="3" fill="#fff" fill-opacity="0.3"/><rect x="778" y="52" width="1" height="7" fill="#fff" fill-opacity="0.4"/><rect x="779" y="57" width="1" height="2" fill="#fff" fill-opacity="0.4"/><rect x="779" y="59" width="1" height="15" fill="#fff" fill-opacity="0.5"/><rect x="780" y="57" width="1" height="2" fill="#fff" fill-opacity="0.5"/><rect x="780" y="59" width="1" height="7" fill="#fff" fill-opacity="0.3"/><rect x="780" y="59" width="1" height="11" fill="#fff" fill-opacity="0.3"/><rect x="781" y="56" width="1" height="3" fill="#fff" fill-opacity="0.5"/><rect x="781" y="59" width="1" height="7" fill="#fff" fill-opacity="0.4"/><rect x="781" y="52" width="1" height="7" fill="#fff" fill-opacity="0.4"/><rect x="782" y="56" width="1" height="3" fill="#fff" fill-opacity="0.4"/><rect x="782" y="59" width="1" height="7" fill="#fff" fill-opacity="0.3"/><rect x="783" y="57" width="1" height="2" fill="#fff" fill-opacity="0.3"/><rect x="783" y="59" width="1" height="9" fill="#fff" fill-opacity="0.5"/><rect x="783" y="59" width="1" height="11" fill="#fff" fill-opacity="0.5"/><rect x="784" y="57" width="1" height="2" fill="#fff" fill-opacity="0.5"/><rect x="784" y="59" width="1" height="9" fill="#fff" fill-opacity="0.3"/><rect x="786" y="57" width="1" height="2" fill="#fff" fill-opacity="0.3"/><rect x="786" y="59" width="1" height="7" fill="#fff" fill-opacity="0.3"/><rect x="786" y="59" width="1" height="11" fill="#fff" fill-opacity="0.5"/><rect x="787" y="59" width="1" height="7" fill="#fff" fill-opacity="0.3"/><rect x="787" y="59" width="1" height="17" fill="#fff" fill-opacity="0.3"/><rect x="788" y="59" width="1" height="9" fill="#fff" fill-opacity="0.4"/><rect x="789" y="59" width="1" height="15" fill="#fff" fill-opacity="0.5"/><rect x="790" y="59" width="1" height="11" fill="#fff" fill-opacity="0.3"/><rect x="791" y="57" width="1" height="2" fill="#fff" fill-opacity="0.6"/><rect x="791" y="59" width="1" height="9" fill="#fff" fill-opacity="0.3"/><rect x="792" y="56" width="1" height="3" fill="#fff" fill-opacity="0.6"/><rect x="792" y="59" width="1" height="11" fill="#fff" fill-opacity="0.3"/><rect x="792" y="59" width="1" height="15" fill="#fff" fill-opacity="0.3"/><rect x="793" y="56" width="1" height="3" fill="#fff" fill-opacity="0.5"/><rect x="793" y="59" width="1" height="11" fill="#fff" fill-opacity="0.3"/><rect x="793" y="59" width="1" height="17" fill="#fff" fill-opacity="0.4"/><rect x="794" y="59" width="1" height="11" fill="#fff" fill-opacity="0.5"/><rect x="794" y="52" width="1" height="7" fill="#fff" fill-opacity="0.4"/><rect x="795" y="59" width="1" height="7" fill="#fff" fill-opacity="0.3"/><rect x="796" y="57" width="1" height="2" fill="#fff" fill-opacity="0.6"/><rect x="796" y="59" width="1" height="9" fill="#fff" fill-opacity="0.3"/><rect x="796" y="59" width="1" height="23" fill="#fff" fill-opacity="0.5"/><rect x="797" y="56" width="1" height="3" fill="#fff" fill-opacity="0.5"/><rect x="797" y="59" width="1" height="11" fill="#fff" fill-opacity="0.4"/><rect x="798" y="57" width="1" height="2" fill="#fff" fill-opacity="0.3"/><rect x="798" y="59" width="1" height="17" fill="#fff" fill-opacity="0.3"/><rect x="799" y="59" width="1" height="7" fill="#fff" fill-opacity="0.5"/><rect x="800" y="56" width="1" height="3" fill="#fff" fill-opacity="0.6"/><rect x="800" y="59" width="1" height="11" fill="#fff" fill-opacity="0.5"/><rect x="800" y="59" width="1" height="21" fill="#fff" fill-opacity="0.4"/><rect x="801" y="59" width="1" height="9" fill="#fff" fill-opacity="0.3"/><rect x="802" y="56" width="1" height="3" fill="#fff" fill-opacity="0.3"/><rect x="802" y="59" width="1" height="21" fill="#fff" fill-opacity="0.5"/><rect x="804" y="59" width="1" height="11" fill="#fff" fill-opacity="0.4"/><rect x="804" y="54" width="1" height="5" fill="#fff" fill-opacity="0.4"/><rect x="805" y="59" width="1" height="11" fill="#fff" fill-opacity="0.3"/><rect x="806" y="59" width="1" height="9" fill="#fff" fill-opacity="0.5"/><rect x="806" y="54" width="1" height="5" fill="#fff" fill-opacity="0.3"/><rect x="807" y="59" width="1" height="21" fill="#fff" fill-opacity="0.5"/><rect x="808" y="59" width="1" height="9" fill="#fff" fill-opacity="0.5"/><rect x="808" y="59" width="1" height="21" fill="#fff" fill-opacity="0.4"/><rect x="809" y="57" width="1" height="2" fill="#fff" fill-opacity="0.5"/><rect x="809" y="59" width="1" height="9" fill="#fff" fill-opacity="0.3"/><rect x="810" y="59" width="1" height="9" fill="#fff" fill-opacity="0.4"/><rect x="810" y="59" width="1" height="23" fill="#fff" fill-opacity="0.3"/><rect x="811" y="57" width="1" height="2" fill="#fff" fill-opacity="0.4"/><rect x="811" y="59" width="1" height="9" fill="#fff" fill-opacity="0.4"/><rect x="812" y="56" width="1" height="3" fill="#fff" fill-opacity="0.5"/><rect x="812" y="59" width="1" height="9" fill="#fff" fill-opacity="0.5"/><rect x="813" y="59" width="1" height="19" fill="#fff" fill-opacity="0.5"/><rect x="814" y="59" width="1" height="11" fill="#fff" fill-opacity="0.5"/><rect x="814" y="54" width="1" height="5" fill="#fff" fill-opacity="0.3"/><rect x="815" y="57" width="1" height="2" fill="#fff" fill-opacity="0.3"/><rect x="815" y="59" width="1" height="7" fill="#fff" fill-opacity="0.4"/><rect x="816" y="57" width="1" height="2" fill="#fff" fill-opacity="0.5"/><rect x="816" y="59" width="1" height="7" fill="#fff" fill-opacity="0.5"/><rect x="816" y="59" width="1" height="13" fill="#fff" fill-opacity="0.5"/><rect x="817" y="59" width="1" height="9" fill="#fff" fill-opacity="0.3"/><rect x="818" y="59" width="1" height="7" fill="#fff" fill-opacity="0.4"/><rect x="818" y="59" width="1" height="13" fill="#fff" fill-opacity="0.4"/><rect x="819" y="59" width="1" height="7" fill="#fff" fill-opacity="0.5"/><rect x="820" y="59" width="1" height="7" fill="#fff" fill-opacity="0.4"/><rect x="821" y="59" width="1" height="7" fill="#fff" fill-opacity="0.4"/><rect x="821" y="59" width="1" height="17" fill="#fff" fill-opacity="0.3"/><rect x="822" y="59" width="1" height="9" fill="#fff" fill-opacity="0.5"/><rect x="823" y="59" width="1" height="7" fill="#fff" fill-opacity="0.4"/><rect x="824" y="59" width="1" height="7" fill="#fff" fill-opacity="0.5"/><rect x="825" y="59" width="1" height="7" fill="#fff" fill-opacity="0.4"/><rect x="826" y="59" width="1" height="7" fill="#fff" fill-opacity="0.4"/><rect x="827" y="59" width="1" height="9" fill="#fff" fill-opacity="0.4"/><rect x="829" y="56" width="1" height="3" fill="#fff" fill-opacity="0.6"/><rect x="829" y="59" width="1" height="9" fill="#fff" fill-opacity="0.5"/><rect x="829" y="59" width="1" height="19" fill="#fff" fill-opacity="0.5"/><rect x="830" y="57" width="1" height="2" fill="#fff" fill-opacity="0.3"/><rect x="830" y="59" width="1" height="9" fill="#fff" fill-opacity="0.3"/><rect x="831" y="59" width="1" height="7" fill="#fff" fill-opacity="0.3"/><rect x="832" y="59" width="1" height="9" fill="#fff" fill-opacity="0.5"/><rect x="832" y="52" width="1" height="7" fill="#fff" fill-opacity="0.4"/><rect x="833" y="59" width="1" height="7" fill="#fff" fill-opacity="0.4"/><rect x="834" y="57" width="1" height="2" fill="#fff" fill-opacity="0.3"/><rect x="834" y="59" width="1" height="9" fill="#fff" fill-opacity="0.3"/><rect x="834" y="59" width="1" height="21" fill="#fff" fill-opacity="0.5"/><rect x="835" y="57" width="1" height="2" fill="#fff" fill-opacity="0.6"/><rect x="835" y="59" width="1" height="7" fill="#fff" fill-opacity="0.5"/><rect x="836" y="57" width="1" height="2" fill="#fff" fill-opacity="0.4"/><rect x="836" y="59" width="1" height="9" fill="#fff" fill-opacity="0.3"/><rect x="836" y="54" width="1" height="5" fill="#fff" fill-opacity="0.4"/><rect x="837" y="59" width="1" height="19" fill="#fff" fill-opacity="0.3"/><rect x="838" y="59" width="1" height="9" fill="#fff" fill-opacity="0.4"/><rect x="839" y="59" width="1" height="9" fill="#fff" fill-opacity="0.3"/><rect x="840" y="57" width="1" height="2" fill="#fff" fill-opacity="0.5"/><rect x="840" y="59" width="1" height="7" fill="#fff" fill-opacity="0.3"/><rect x="840" y="54" width="1" height="5" fill="#fff" fill-opacity="0.3"/><rect x="841" y="57" width="1" height="2" fill="#fff" fill-opacity="0.6"/><rect x="841" y="59" width="1" height="7" fill="#fff" fill-opacity="0.4"/><rect x="842" y="59" width="1" height="5" fill="#fff" fill-opacity="0.5"/><rect x="843" y="59" width="1" height="5" fill="#fff" fill-opacity="0.5"/><rect x="843" y="54" width="1" height="5" fill="#fff" fill-opacity="0.5"/><rect x="844" y="56" width="1" height="3" fill="#fff" fill-opacity="0.3"/><rect x="844" y="59" width="1" height="5" fill="#fff" fill-opacity="0.5"/><rect x="844" y="52" width="1" height="7" fill="#fff" fill-opacity="0.5"/><rect x="845" y="59" width="1" height="7" fill="#fff" fill-opacity="0.3"/><rect x="845" y="59" width="1" height="15" fill="#fff" fill-opacity="0.3"/><rect x="846" y="59" width="1" height="7" fill="#fff" fill-opacity="0.5"/><rect x="847" y="57" width="1" height="2" fill="#fff" fill-opacity="0.3"/><rect x="847" y="59" width="1" height="7" fill="#fff" fill-opacity="0.5"/><rect x="848" y="57" width="1" height="2" fill="#fff" fill-opacity="0.6"/><rect x="848" y="59" width="1" height="7" fill="#fff" fill-opacity="0.4"/><rect x="848" y="54" width="1" height="5" fill="#fff" fill-opacity="0.4"/><rect x="849" y="57" width="1" height="2" fill="#fff" fill-opacity="0.3"/><rect x="849" y="59" width="1" height="7" fill="#fff" fill-opacity="0.3"/><rect x="874" y="56" width="1" height="3" fill="#fff" fill-opacity="0.4"/><rect x="874" y="59" width="1" height="3" fill="#fff" fill-opacity="0.5"/><rect x="874" y="50" width="1" height="9" fill="#fff" fill-opacity="0.3"/><rect x="875" y="56" width="1" height="3" fill="#fff" fill-opacity="0.5"/><rect x="875" y="59" width="1" height="3" fill="#fff" fill-opacity="0.5"/><rect x="875" y="48" width="1" height="11" fill="#fff" fill-opacity="0.3"/><rect x="877" y="56" width="1" height="3" fill="#fff" fill-opacity="0.4"/><rect x="877" y="59" width="1" height="3" fill="#fff" fill-opacity="0.3"/><rect x="877" y="48" width="1" height="11" fill="#fff" fill-opacity="0.4"/><rect x="879" y="46" width="1" height="13" fill="#fff" fill-opacity="0.5"/><rect x="881" y="56" width="1" height="3" fill="#fff" fill-opacity="0.6"/><rect x="883" y="48" width="1" height="11" fill="#fff" fill-opacity="0.5"/><rect x="884" y="56" width="1" height="3" fill="#fff" fill-opacity="0.6"/><rect x="886" y="56" width="1" height="3" fill="#fff" fill-opacity="0.3"/><rect x="887" y="56" width="1" height="3" fill="#fff" fill-opacity="0.5"/><rect x="887" y="59" width="1" height="3" fill="#fff" fill-opacity="0.4"/><rect x="888" y="56" width="1" height="3" fill="#fff" fill-opacity="0.6"/><rect x="893" y="50" width="1" height="9" fill="#fff" fill-opacity="0.3"/><rect x="896" y="56" width="1" height="3" fill="#fff" fill-opacity="0.3"/><rect x="896" y="59" width="1" height="3" fill="#fff" fill-opacity="0.4"/><rect x="896" y="59" width="1" height="7" fill="#fff" fill-opacity="0.5"/><rect x="898" y="59" width="1" height="3" fill="#fff" fill-opacity="0.5"/><rect x="898" y="48" width="1" height="11" fill="#fff" fill-opacity="0.4"/><rect x="899" y="56" width="1" height="3" fill="#fff" fill-opacity="0.4"/><rect x="899" y="59" width="1" height="3" fill="#fff" fill-opacity="0.3"/><rect x="900" y="54" width="1" height="5" fill="#fff" fill-opacity="0.5"/><rect x="902" y="56" width="1" height="3" fill="#fff" fill-opacity="0.5"/><rect x="903" y="59" width="1" height="3" fill="#fff" fill-opacity="0.3"/><rect x="903" y="46" width="1" height="13" fill="#fff" fill-opacity="0.4"/><rect x="904" y="56" width="1" height="3" fill="#fff" fill-opacity="0.4"/><rect x="904" y="59" width="1" height="3" fill="#fff" fill-opacity="0.3"/><rect x="904" y="46" width="1" height="13" fill="#fff" fill-opacity="0.5"/><rect x="906" y="56" width="1" height="3" fill="#fff" fill-opacity="0.3"/><rect x="908" y="52" width="1" height="7" fill="#fff" fill-opacity="0.4"/><rect x="908" y="48" width="1" height="11" fill="#fff" fill-opacity="0.4"/><rect x="909" y="52" width="1" height="7" fill="#fff" fill-opacity="0.6"/><rect x="909" y="59" width="1" height="7" fill="#fff" fill-opacity="0.4"/><rect x="910" y="59" width="1" height="3" fill="#fff" fill-opacity="0.3"/><rect x="912" y="46" width="1" height="13" fill="#fff" fill-opacity="0.5"/><rect x="912" y="40" width="1" height="19" fill="#fff" fill-opacity="0.3"/><rect x="913" y="50" width="1" height="9" fill="#fff" fill-opacity="0.4"/><rect x="913" y="59" width="1" height="3" fill="#fff" fill-opacity="0.4"/><rect x="913" y="42" width="1" height="17" fill="#fff" fill-opacity="0.3"/><rect x="914" y="48" width="1" height="11" fill="#fff" fill-opacity="0.3"/><rect x="914" y="42" width="1" height="17" fill="#fff" fill-opacity="0.3"/><rect x="915" y="48" width="1" height="11" fill="#fff" fill-opacity="0.4"/><rect x="916" y="50" width="1" height="9" fill="#fff" fill-opacity="0.6"/><rect x="916" y="59" width="1" height="3" fill="#fff" fill-opacity="0.3"/><rect x="917" y="59" width="1" height="3" fill="#fff" fill-opacity="0.5"/><rect x="919" y="48" width="1" height="11" fill="#fff" fill-opacity="0.4"/><rect x="920" y="44" width="1" height="15" fill="#fff" fill-opacity="0.5"/><rect x="920" y="59" width="1" height="2" fill="#fff" fill-opacity="0.5"/><rect x="921" y="36" width="1" height="23" fill="#fff" fill-opacity="0.5"/><rect x="921" y="34" width="1" height="25" fill="#fff" fill-opacity="0.3"/><rect x="922" y="36" width="1" height="23" fill="#fff" fill-opacity="0.4"/><rect x="922" y="59" width="1" height="7" fill="#fff" fill-opacity="0.5"/><rect x="923" y="40" width="1" height="19" fill="#fff" fill-opacity="0.4"/><rect x="923" y="59" width="1" height="2" fill="#fff" fill-opacity="0.4"/><rect x="923" y="38" width="1" height="21" fill="#fff" fill-opacity="0.5"/><rect x="924" y="44" width="1" height="15" fill="#fff" fill-opacity="0.5"/><rect x="925" y="38" width="1" height="21" fill="#fff" fill-opacity="0.3"/><rect x="925" y="59" width="1" height="7" fill="#fff" fill-opacity="0.5"/><rect x="926" y="59" width="1" height="3" fill="#fff" fill-opacity="0.3"/><rect x="927" y="44" width="1" height="15" fill="#fff" fill-opacity="0.4"/><rect x="927" y="59" width="1" height="2" fill="#fff" fill-opacity="0.4"/><rect x="927" y="36" width="1" height="23" fill="#fff" fill-opacity="0.5"/><rect x="928" y="36" width="1" height="23" fill="#fff" fill-opacity="0.5"/><rect x="928" y="36" width="1" height="23" fill="#fff" fill-opacity="0.4"/><rect x="929" y="40" width="1" height="19" fill="#fff" fill-opacity="0.6"/><rect x="929" y="59" width="1" height="7" fill="#fff" fill-opacity="0.5"/><rect x="930" y="42" width="1" height="17" fill="#fff" fill-opacity="0.6"/><rect x="930" y="59" width="1" height="3" fill="#fff" fill-opacity="0.3"/><rect x="931" y="36" width="1" height="23" fill="#fff" fill-opacity="0.6"/><rect x="932" y="38" width="1" height="21" fill="#fff" fill-opacity="0.6"/><rect x="932" y="59" width="1" height="2" fill="#fff" fill-opacity="0.5"/><rect x="932" y="59" width="1" height="5" fill="#fff" fill-opacity="0.3"/><rect x="933" y="40" width="1" height="19" fill="#fff" fill-opacity="0.5"/><rect x="933" y="59" width="1" height="7" fill="#fff" fill-opacity="0.4"/><rect x="934" y="40" width="1" height="19" fill="#fff" fill-opacity="0.3"/><rect x="935" y="48" width="1" height="11" fill="#fff" fill-opacity="0.5"/><rect x="935" y="59" width="1" height="3" fill="#fff" fill-opacity="0.4"/><rect x="935" y="59" width="1" height="11" fill="#fff" fill-opacity="0.5"/><rect x="936" y="46" width="1" height="13" fill="#fff" fill-opacity="0.4"/><rect x="936" y="59" width="1" height="3" fill="#fff" fill-opacity="0.4"/><rect x="936" y="44" width="1" height="15" fill="#fff" fill-opacity="0.4"/><rect x="937" y="44" width="1" height="15" fill="#fff" fill-opacity="0.4"/><rect x="938" y="50" width="1" height="9" fill="#fff" fill-opacity="0.5"/><rect x="938" y="59" width="1" height="11" fill="#fff" fill-opacity="0.5"/><rect x="939" y="46" width="1" height="13" fill="#fff" fill-opacity="0.3"/><rect x="940" y="44" width="1" height="15" fill="#fff" fill-opacity="0.5"/><rect x="940" y="59" width="1" height="7" fill="#fff" fill-opacity="0.3"/><rect x="941" y="44" width="1" height="15" fill="#fff" fill-opacity="0.5"/><rect x="941" y="59" width="1" height="3" fill="#fff" fill-opacity="0.3"/><rect x="941" y="59" width="1" height="7" fill="#fff" fill-opacity="0.4"/><rect x="942" y="46" width="1" height="13" fill="#fff" fill-opacity="0.5"/><rect x="942" y="59" width="1" height="3" fill="#fff" fill-opacity="0.3"/><rect x="943" y="44" width="1" height="15" fill="#fff" fill-opacity="0.5"/><rect x="945" y="52" width="1" height="7" fill="#fff" fill-opacity="0.4"/><rect x="946" y="52" width="1" height="7" fill="#fff" fill-opacity="0.4"/><rect x="947" y="52" width="1" height="7" fill="#fff" fill-opacity="0.4"/><rect x="947" y="59" width="1" height="5" fill="#fff" fill-opacity="0.5"/><rect x="947" y="59" width="1" height="13" fill="#fff" fill-opacity="0.5"/><rect x="948" y="54" width="1" height="5" fill="#fff" fill-opacity="0.6"/><rect x="948" y="59" width="1" height="5" fill="#fff" fill-opacity="0.5"/><rect x="949" y="52" width="1" height="7" fill="#fff" fill-opacity="0.6"/><rect x="949" y="46" width="1" height="13" fill="#fff" fill-opacity="0.3"/><rect x="950" y="52" width="1" height="7" fill="#fff" fill-opacity="0.3"/><rect x="951" y="52" width="1" height="7" fill="#fff" fill-opacity="0.4"/><rect x="951" y="59" width="1" height="5" fill="#fff" fill-opacity="0.4"/><rect x="955" y="56" width="1" height="3" fill="#fff" fill-opacity="0.6"/><rect x="955" y="59" width="1" height="7" fill="#fff" fill-opacity="0.4"/><rect x="956" y="59" width="1" height="5" fill="#fff" fill-opacity="0.5"/><rect x="957" y="59" width="1" height="7" fill="#fff" fill-opacity="0.4"/><rect x="957" y="59" width="1" height="13" fill="#fff" fill-opacity="0.3"/><rect x="958" y="56" width="1" height="3" fill="#fff" fill-opacity="0.4"/><rect x="958" y="59" width="1" height="5" fill="#fff" fill-opacity="0.3"/><rect x="959" y="54" width="1" height="5" fill="#fff" fill-opacity="0.5"/><rect x="960" y="54" width="1" height="5" fill="#fff" fill-opacity="0.4"/><rect x="960" y="59" width="1" height="5" fill="#fff" fill-opacity="0.3"/><rect x="961" y="54" width="1" height="5" fill="#fff" fill-opacity="0.5"/><rect x="961" y="59" width="1" height="5" fill="#fff" fill-opacity="0.5"/><rect x="962" y="59" width="1" height="7" fill="#fff" fill-opacity="0.4"/><rect x="963" y="56" width="1" height="3" fill="#fff" fill-opacity="0.3"/><rect x="963" y="59" width="1" height="5" fill="#fff" fill-opacity="0.4"/><rect x="963" y="59" width="1" height="15" fill="#fff" fill-opacity="0.5"/><rect x="966" y="56" width="1" height="3" fill="#fff" fill-opacity="0.6"/><rect x="966" y="59" width="1" height="5" fill="#fff" fill-opacity="0.4"/><rect x="966" y="52" width="1" height="7" fill="#fff" fill-opacity="0.3"/><rect x="40" y="33" width="1" height="50" fill="#fff" fill-opacity="0.2"/><rect x="41" y="33" width="1" height="50" fill="#3a6ea5" fill-opacity="0.8"/><text x="43" y="44" font-size="11" letter-spacing="0.35" fill="#fff" font-family='"Liberation Sans", sans-serif'>2002</text><rect x="159" y="33" width="1" height="50" fill="#fff" fill-opacity="0.2"/><rect x="160" y="33" width="1" height="50" fill="#3a6ea5" fill-opacity="0.8"/><text x="162" y="44" font-size="11" letter-spacing="0.35" fill="#fff" font-family='"Liberation Sans", sans-serif'>2003</text><rect x="278" y="33" width="1" height="50" fill="#fff" fill-opacity="0.2"/><rect x="279" y="33" width="1" height="50" fill="#3a6ea5" fill-opacity="0.8"/><text x="281" y="44" font-size="11" letter-spacing="0.35" fill="#fff" font-family='"Liberation Sans", sans-serif'>2004</text><rect x="397" y="33" width="1" height="50" fill="#fff" fill-opacity="0.2"/><rect x="398" y="33" width="1" height="50" fill="#3a6ea5" fill-opacity="0.8"/><text x="400" y="44" font-size="11" letter-spacing="0.35" fill="#fff" font-family='"Liberation Sans", sans-serif'>2005</text><rect x="516" y="33" width="1" height="50" fill="#fff" fill-opacity="0.2"/><rect x="517" y="33" width="1" height="50" fill="#3a6ea5" fill-opacity="0.8"/><text x="519" y="44" font-size="11" letter-spacing="0.35" fill="#fff" font-family='"Liberation Sans", sans-serif'>2006</text><rect x="635" y="33" width="1" height="50" fill="#fff" fill-opacity="0.2"/><rect x="636" y="33" width="1" height="50" fill="#3a6ea5" fill-opacity="0.8"/><text x="638" y="44" font-size="11" letter-spacing="0.35" fill="#fff" font-family='"Liberation Sans", sans-serif'>2007</text><rect x="754" y="33" width="1" height="50" fill="#fff" fill-opacity="0.2"/><rect x="755" y="33" width="1" height="50" fill="#3a6ea5" fill-opacity="0.8"/><text x="757" y="44" font-size="11" letter-spacing="0.35" fill="#fff" font-family='"Liberation Sans", sans-serif'>2008</text><rect x="873" y="33" width="1" height="50" fill="#fff" fill-opacity="0.2"/><rect x="874" y="33" width="1" height="50" fill="#3a6ea5" fill-opacity="0.8"/><text x="876" y="44" font-size="11" letter-spacing="0.35" fill="#fff" font-family='"Liberation Sans", sans-serif'>2009</text><rect x="14" y="52" width="6" height="12" fill="#e8e8e8"/><rect x="14" y="52" width="1" height="12" fill="#666"/><rect x="16" y="52" width="1" height="12" fill="#666"/><rect x="18" y="52" width="1" height="12" fill="#666"/><rect x="967" y="52" width="6" height="12" fill="#e8e8e8"/><rect x="967" y="52" width="1" height="12" fill="#666"/><rect x="969" y="52" width="1" height="12" fill="#666"/><rect x="971" y="52" width="1" height="12" fill="#666"/></svg><div class="t" style="left:296.5px;top:96px;font-size:18.55px;color:#333">MA&nbsp; 50-200 Test on S&amp;P 500 - Absolute Returns</div><div class="t" style="left:384px;top:125px;font-size:11.5px;color:#333">4,648 results from 10/4/2001 to 10/30/2009</div><svg class="a" style="left:0;top:130px" width="986" height="400" viewBox="0 130 986 400"><line x1="18" y1="143.5" x2="944" y2="143.5" stroke="#cccccc" stroke-width="1" stroke-dasharray="8,8" stroke-dashoffset="4"/><text x="949" y="147.3" font-size="10.5" letter-spacing="0.75" fill="#333" font-family='"Liberation Sans", sans-serif'>10.0</text><line x1="18" y1="178.5" x2="944" y2="178.5" stroke="#cccccc" stroke-width="1" stroke-dasharray="8,8" stroke-dashoffset="4"/><text x="949" y="182.7" font-size="10.5" letter-spacing="0.75" fill="#333" font-family='"Liberation Sans", sans-serif'>8.0</text><line x1="18" y1="214.5" x2="944" y2="214.5" stroke="#cccccc" stroke-width="1" stroke-dasharray="8,8" stroke-dashoffset="4"/><text x="949" y="218.1" font-size="10.5" letter-spacing="0.75" fill="#333" font-family='"Liberation Sans", sans-serif'>6.0</text><line x1="18" y1="249.5" x2="944" y2="249.5" stroke="#cccccc" stroke-width="1" stroke-dasharray="8,8" stroke-dashoffset="4"/><text x="949" y="253.5" font-size="10.5" letter-spacing="0.75" fill="#333" font-family='"Liberation Sans", sans-serif'>4.0</text><line x1="18" y1="285.5" x2="944" y2="285.5" stroke="#cccccc" stroke-width="1" stroke-dasharray="8,8" stroke-dashoffset="4"/><text x="949" y="288.9" font-size="10.5" letter-spacing="0.75" fill="#333" font-family='"Liberation Sans", sans-serif'>2.0</text><line x1="23" y1="320" x2="944" y2="320" stroke="#c8c8c8" stroke-width="2"/><text x="949" y="324.3" font-size="10.5" letter-spacing="0.75" fill="#333" font-family='"Liberation Sans", sans-serif'>0.0</text><line x1="18" y1="356.5" x2="944" y2="356.5" stroke="#cccccc" stroke-width="1" stroke-dasharray="8,8" stroke-dashoffset="4"/><text x="949" y="359.7" font-size="10.5" letter-spacing="0.75" fill="#333" font-family='"Liberation Sans", sans-serif'>-2.0</text><line x1="18" y1="391.5" x2="944" y2="391.5" stroke="#cccccc" stroke-width="1" stroke-dasharray="8,8" stroke-dashoffset="4"/><text x="949" y="395.1" font-size="10.5" letter-spacing="0.75" fill="#333" font-family='"Liberation Sans", sans-serif'>-4.0</text><line x1="18" y1="427.5" x2="944" y2="427.5" stroke="#cccccc" stroke-width="1" stroke-dasharray="8,8" stroke-dashoffset="4"/><text x="949" y="430.5" font-size="10.5" letter-spacing="0.75" fill="#333" font-family='"Liberation Sans", sans-serif'>-6.0</text><line x1="18" y1="462.5" x2="944" y2="462.5" stroke="#cccccc" stroke-width="1" stroke-dasharray="8,8" stroke-dashoffset="4"/><text x="949" y="465.9" font-size="10.5" letter-spacing="0.75" fill="#333" font-family='"Liberation Sans", sans-serif'>-8.0</text><line x1="18" y1="497.5" x2="944" y2="497.5" stroke="#cccccc" stroke-width="1" stroke-dasharray="8,8" stroke-dashoffset="4"/><text x="949" y="501.3" font-size="10.5" letter-spacing="0.75" fill="#333" font-family='"Liberation Sans", sans-serif'>-10.0</text><line x1="152" y1="143" x2="152" y2="505" stroke="#c8c8c8" stroke-width="2"/><line x1="936.5" y1="143" x2="936.5" y2="505" stroke="#f5a623" stroke-width="1"/><polyline points="23.2,359.0 35.0,354.0 52.8,347.2 77.3,339.4 110.7,330.0 135.2,323.4 140.0,322.4 152.0,320.0 160.3,320.7 166.4,320.2 172.5,320.9 178.5,319.6 186.7,319.0 194.8,317.8 235.0,318.0 243.9,316.4 250.6,317.8 259.6,315.8 271.8,315.8 279.6,313.9 288.6,313.6 295.3,312.5 304.2,311.6 313.1,310.8 319.8,309.7 327.6,309.7 333.2,308.5 340.0,308.0 351.7,306.9 367.0,304.7 386.9,304.7 392.8,303.6 401.0,303.6 410.4,301.8 426.9,301.8 431.5,300.8 443.3,300.8 445.0,300.4 449.7,299.8 456.7,299.8 460.3,300.7 473.2,300.7 479.0,299.8 492.0,299.8 496.6,298.6 500.2,298.6 504.9,297.8 526.0,297.8 530.7,296.9 551.8,296.9 555.0,297.8 557.3,298.0 593.8,298.0 597.9,297.0 604.0,298.0 612.1,298.0 616.1,298.7 624.2,298.7 628.3,298.0 642.5,298.0 646.6,299.1 652.6,298.0 693.2,298.0 697.3,297.0 727.7,297.0 742.8,295.7 762.0,294.6 772.6,293.1 793.9,291.8 815.2,290.3 836.5,288.6 857.8,287.1 874.8,286.1 896.1,285.0 917.4,283.9 938.7,283.9" fill="none" stroke="#ffa500" stroke-width="2.2" stroke-linejoin="round"/><polyline points="23.2,468.0 30.6,456.9 39.5,448.0 52.8,432.4 65.0,413.5 69.5,410.6 77.3,401.2 90.7,387.9 96.2,383.4 104.0,374.5 112.9,365.6 121.8,354.5 132.9,341.2 139.6,336.7 152.0,320.0 164.3,319.3 169.4,317.1 177.5,316.5 185.6,313.0 190.7,312.7 194.8,310.7 205.9,308.0 217.0,307.7 225.2,303.9 231.3,302.9 235.0,301.9 238.3,300.7 242.8,301.1 250.6,299.1 255.1,296.6 262.9,294.8 267.4,295.2 271.8,291.8 280.8,289.6 286.3,287.1 297.5,283.4 302.0,280.6 307.5,278.4 316.5,276.0 327.6,273.6 332.1,271.5 340.0,269.9 344.7,269.9 352.9,267.9 357.6,265.5 365.8,262.8 374.0,260.8 381.1,260.8 388.1,257.8 395.2,256.6 405.7,254.6 411.6,251.9 417.5,251.7 423.3,249.7 428.0,249.7 436.2,246.8 443.3,244.9 445.0,244.6 452.0,244.0 456.7,242.6 461.4,242.6 466.1,241.7 469.6,243.1 480.2,240.3 483.7,239.3 487.3,237.6 494.3,235.8 508.4,232.7 521.3,232.9 526.0,231.7 535.4,231.7 542.4,229.7 548.3,229.7 551.8,228.8 555.0,228.8 565.4,228.7 569.5,230.1 573.5,227.9 581.7,227.9 585.7,231.1 597.9,227.9 604.0,228.7 612.1,228.7 616.1,229.9 624.2,228.7 634.4,227.1 638.4,228.1 646.6,228.1 656.7,226.7 672.9,223.0 677.0,223.0 689.2,220.0 705.4,220.0 711.5,218.9 719.6,218.5 727.7,216.9 736.4,216.9 740.6,215.4 753.4,215.4 759.8,213.2 766.2,212.6 771.5,213.9 783.2,210.9 789.6,210.5 796.0,209.0 804.5,207.9 810.9,205.1 819.5,203.7 823.7,203.7 836.5,200.9 847.1,200.5 857.8,198.8 868.4,197.0 874.8,196.6 881.2,194.1 896.1,192.8 911.0,191.7 921.7,190.7 932.3,190.7 935.5,189.6 938.7,190.7" fill="none" stroke="#008000" stroke-width="2.2" stroke-linejoin="round"/><polyline points="23.2,429.7 31.7,421.3 40.6,415.7 59.5,397.9 65.0,389.0 69.5,389.0 75.0,384.6 95.1,369.0 104.0,360.0 113.0,355.6 121.8,346.7 139.6,333.4 152.0,320.0 158.3,319.0 164.3,318.8 169.4,316.5 172.5,316.1 177.5,316.8 181.6,315.8 186.7,313.8 190.7,313.6 194.8,311.7 202.9,311.7 210.0,310.0 220.1,309.7 224.2,305.6 229.2,305.3 235.0,304.4 241.7,303.9 250.6,301.5 264.0,298.7 268.5,298.5 274.1,296.0 280.8,295.7 288.6,293.5 297.5,290.1 303.1,288.5 313.1,286.6 327.6,283.7 337.7,282.7 340.0,282.8 344.7,282.8 352.9,281.6 357.6,279.9 362.3,279.9 368.2,277.9 371.7,277.9 375.2,275.8 383.4,276.0 388.1,274.0 392.8,274.0 398.7,272.8 403.4,272.6 413.9,269.9 417.5,271.1 424.5,268.1 433.9,267.2 439.8,264.6 445.0,264.6 452.0,263.8 461.4,261.6 466.1,261.6 469.6,262.8 480.2,260.2 486.1,257.9 491.9,257.9 500.2,255.8 506.0,255.8 509.6,254.6 516.6,254.6 521.3,255.8 526.0,254.8 535.4,254.6 538.9,253.7 543.6,253.7 551.8,251.8 555.0,251.8 567.5,252.0 573.5,251.0 581.7,251.0 585.7,254.0 597.9,251.0 604.0,252.0 608.0,251.0 616.1,252.0 624.2,250.0 640.5,250.0 648.6,249.0 656.7,249.0 670.9,245.3 677.0,244.9 685.1,243.3 693.2,241.9 697.3,242.9 707.4,242.9 711.5,241.9 725.7,241.9 729.7,240.9 753.4,240.7 762.0,238.8 766.2,238.8 771.5,239.9 774.7,239.9 781.1,238.6 787.5,238.6 798.2,236.7 806.7,236.7 813.1,233.9 825.8,233.9 832.2,232.8 853.5,232.8 857.8,231.8 862.1,232.8 870.6,230.9 875.9,230.9 879.1,229.2 887.6,227.9 891.9,229.0 904.7,229.0 913.2,227.1 917.4,227.9 932.3,227.9 935.5,226.9 938.7,226.9" fill="none" stroke="#ff0000" stroke-width="2.2" stroke-linejoin="round"/><text x="23" y="521" font-size="10.5" fill="#333" font-family='"Liberation Sans", sans-serif'>-30</text><text x="149" y="521" font-size="10.5" fill="#333" font-family='"Liberation Sans", sans-serif'>0</text><rect x="925.5" y="510.5" width="27" height="15" fill="#fff" stroke="#c8c8c8"/><text x="930.5" y="521" font-size="10.5" fill="#333" font-family='"Liberation Sans", sans-serif'>183</text></svg><div class="a" style="left:13px;top:545px;width:351px;height:250px;border:1px solid #cfcfcf;border-radius:0 0 3px 3px;background:#f5f5f5"></div><div class="a" style="left:13px;top:546px;width:350px;height:22px;background:#0063c7"></div><div class="a" style="left:14px;top:568px;width:349px;height:22px;background:#ffffff"></div><div class="a" style="left:14px;top:590px;width:349px;height:22px;background:#f5f5f5"></div><div class="a" style="left:14px;top:612px;width:349px;height:22px;background:#ffffff"></div><div class="a" style="left:14px;top:634px;width:349px;height:22px;background:#f5f5f5"></div><div class="a" style="left:14px;top:656px;width:349px;height:22px;background:#ffffff"></div><div class="a" style="left:14px;top:678px;width:349px;height:22px;background:#f5f5f5"></div><div class="a" style="left:14px;top:700px;width:349px;height:22px;background:#ffffff"></div><div class="a" style="left:14px;top:722px;width:349px;height:22px;background:#f5f5f5"></div><div class="a" style="left:14px;top:744px;width:349px;height:22px;background:#ffffff"></div><div class="a" style="left:14px;top:766px;width:349px;height:22px;background:#f5f5f5"></div><div class="a" style="left:13px;top:590px;width:350px;height:1px;background:#cccccc"></div><div class="a" style="left:13px;top:612px;width:350px;height:1px;background:#cccccc"></div><div class="a" style="left:13px;top:634px;width:350px;height:1px;background:#cccccc"></div><div class="a" style="left:13px;top:656px;width:350px;height:1px;background:#cccccc"></div><div class="a" style="left:13px;top:678px;width:350px;height:1px;background:#cccccc"></div><div class="a" style="left:13px;top:700px;width:350px;height:1px;background:#cccccc"></div><div class="a" style="left:13px;top:722px;width:350px;height:1px;background:#cccccc"></div><div class="a" style="left:13px;top:744px;width:350px;height:1px;background:#cccccc"></div><div class="a" style="left:13px;top:766px;width:350px;height:1px;background:#cccccc"></div><div class="a" style="left:13px;top:788px;width:350px;height:1px;background:#cccccc"></div><div class="a" style="left:13px;top:546px;width:1px;height:243px;background:#cccccc"></div><div class="a" style="left:138px;top:546px;width:1px;height:243px;background:#cccccc"></div><div class="a" style="left:213px;top:546px;width:1px;height:243px;background:#cccccc"></div><div class="a" style="left:288px;top:546px;width:1px;height:243px;background:#cccccc"></div><div class="a" style="left:363px;top:546px;width:1px;height:243px;background:#cccccc"></div><div class="t" style="left:21.5px;top:552px;font-size:11.4px;letter-spacing:0.8px;color:#fff">Statistics</div><div class="t" style="left:146.5px;top:552px;font-size:11.4px;letter-spacing:1.15px;color:#fff">Abs Signal</div><div class="t" style="left:221.5px;top:552px;font-size:11.4px;letter-spacing:1.7px;color:#fff">Index</div><div class="t" style="left:296.5px;top:552px;font-size:11.4px;letter-spacing:1.25px;color:#fff">MC Sim</div><div class="t" style="left:22px;top:574.5px;font-size:11.4px;letter-spacing:0.68px;color:#1e1e1e">Probability of Gain</div><div class="t" style="left:147px;top:574.5px;font-size:11.4px;letter-spacing:0.95px;color:#1e1e1e">49.22%</div><div class="t" style="left:222px;top:574.5px;font-size:11.4px;letter-spacing:0.95px;color:#1e1e1e">63.32%</div><div class="t" style="left:297px;top:574.5px;font-size:11.4px;letter-spacing:0.95px;color:#1e1e1e">68.05%</div><div class="t" style="left:22px;top:596.5px;font-size:11.4px;letter-spacing:0.68px;color:#1e1e1e">Probability of Loss</div><div class="t" style="left:147px;top:596.5px;font-size:11.4px;letter-spacing:0.95px;color:#1e1e1e">50.78%</div><div class="t" style="left:222px;top:596.5px;font-size:11.4px;letter-spacing:0.95px;color:#1e1e1e">36.68%</div><div class="t" style="left:297px;top:596.5px;font-size:11.4px;letter-spacing:0.95px;color:#1e1e1e">31.95%</div><div class="t" style="left:22px;top:640.5px;font-size:11.4px;letter-spacing:0.68px;color:#1e1e1e">Mean Return</div><div class="t" style="left:147px;top:640.5px;font-size:11.4px;letter-spacing:0.95px;color:#1e1e1e">7.32%</div><div class="t" style="left:222px;top:640.5px;font-size:11.4px;letter-spacing:0.95px;color:#1e1e1e">2.08%</div><div class="t" style="left:297px;top:640.5px;font-size:11.4px;letter-spacing:0.95px;color:#1e1e1e">109.18%</div><div class="t" style="left:22px;top:662.5px;font-size:11.4px;letter-spacing:0.68px;color:#1e1e1e">Median Return</div><div class="t" style="left:147px;top:662.5px;font-size:11.4px;letter-spacing:0.95px;color:#a00000">-0.49%</div><div class="t" style="left:222px;top:662.5px;font-size:11.4px;letter-spacing:0.95px;color:#1e1e1e">3.32%</div><div class="t" style="left:297px;top:662.5px;font-size:11.4px;letter-spacing:0.95px;color:#1e1e1e">44.83%</div><div class="t" style="left:22px;top:684.5px;font-size:11.4px;letter-spacing:0.68px;color:#1e1e1e">80th Percentile</div><div class="t" style="left:147px;top:684.5px;font-size:11.4px;letter-spacing:0.95px;color:#1e1e1e">25.02%</div><div class="t" style="left:222px;top:684.5px;font-size:11.4px;letter-spacing:0.95px;color:#1e1e1e">12.76%</div><div class="t" style="left:297px;top:684.5px;font-size:11.4px;letter-spacing:0.95px;color:#1e1e1e">185.07%</div><div class="t" style="left:22px;top:706.5px;font-size:11.4px;letter-spacing:0.68px;color:#1e1e1e">20th Percentile</div><div class="t" style="left:147px;top:706.5px;font-size:11.4px;letter-spacing:0.95px;color:#a00000">-13.24%</div><div class="t" style="left:222px;top:706.5px;font-size:11.4px;letter-spacing:0.95px;color:#a00000">-6.84%</div><div class="t" style="left:297px;top:706.5px;font-size:11.4px;letter-spacing:0.95px;color:#a00000">-24.12%</div><div class="t" style="left:22px;top:728.5px;font-size:11.4px;letter-spacing:0.68px;color:#1e1e1e">Skewness</div><div class="t" style="left:147px;top:728.5px;font-size:11.4px;letter-spacing:0.95px;color:#1e1e1e">2.43</div><div class="t" style="left:222px;top:728.5px;font-size:11.4px;letter-spacing:0.95px;color:#a00000">-0.61</div><div class="t" style="left:297px;top:728.5px;font-size:11.4px;letter-spacing:0.95px;color:#1e1e1e">7.63</div><div class="t" style="left:22px;top:750.5px;font-size:11.4px;letter-spacing:0.68px;color:#1e1e1e">Kurtosis</div><div class="t" style="left:147px;top:750.5px;font-size:11.4px;letter-spacing:0.95px;color:#1e1e1e">16.38</div><div class="t" style="left:222px;top:750.5px;font-size:11.4px;letter-spacing:0.95px;color:#1e1e1e">3.49</div><div class="t" style="left:297px;top:750.5px;font-size:11.4px;letter-spacing:0.95px;color:#1e1e1e">119.08</div><div class="t" style="left:22px;top:772.5px;font-size:11.4px;letter-spacing:0.68px;color:#1e1e1e">Standard Deviation</div><div class="t" style="left:147px;top:772.5px;font-size:11.4px;letter-spacing:0.95px;color:#1e1e1e">31.05%</div><div class="t" style="left:222px;top:772.5px;font-size:11.4px;letter-spacing:0.95px;color:#1e1e1e">13.39%</div><div class="t" style="left:297px;top:772.5px;font-size:11.4px;letter-spacing:0.95px;color:#1e1e1e">247.27%</div><div class="t" style="left:372.5px;top:526.6px;font-size:13px;font-weight:bold;letter-spacing:0.3px;color:#333">Absolute Profit Analysis</div><div class="t" style="left:678px;top:526.6px;font-size:13px;font-weight:bold;letter-spacing:0.5px;color:#333">Monte Carlo Simulation</div><div class="a" style="left:373px;top:545px;width:295px;height:250px;border:1px solid #cfcfcf;border-radius:3px;background:#f5f5f5"></div><div class="a" style="left:678px;top:545px;width:296px;height:250px;border:1px solid #cfcfcf;border-radius:3px;background:#f5f5f5"></div><svg class="a" style="left:373px;top:545px" width="295" height="250" viewBox="373 545 295 250"><defs><linearGradient id="gg" gradientUnits="userSpaceOnUse" x1="0" y1="555" x2="0" y2="757"><stop offset="0" stop-color="#6cba6c"/><stop offset="1" stop-color="#178a17"/></linearGradient></defs><line x1="382.5" y1="555" x2="382.5" y2="757.5" stroke="#d9d9d9"/><text transform="translate(387.1,763.5) rotate(-90)" text-anchor="end" font-size="10.5" fill="#333" font-family='"Liberation Sans", sans-serif'>-100</text><line x1="406.5" y1="555" x2="406.5" y2="757.5" stroke="#d9d9d9"/><text transform="translate(411.1,763.5) rotate(-90)" text-anchor="end" font-size="10.5" fill="#333" font-family='"Liberation Sans", sans-serif'>-80</text><line x1="431.5" y1="555" x2="431.5" y2="757.5" stroke="#d9d9d9"/><text transform="translate(436.1,763.5) rotate(-90)" text-anchor="end" font-size="10.5" fill="#333" font-family='"Liberation Sans", sans-serif'>-60</text><line x1="455.5" y1="555" x2="455.5" y2="757.5" stroke="#d9d9d9"/><text transform="translate(460.1,763.5) rotate(-90)" text-anchor="end" font-size="10.5" fill="#333" font-family='"Liberation Sans", sans-serif'>-40</text><line x1="480.5" y1="555" x2="480.5" y2="757.5" stroke="#d9d9d9"/><text transform="translate(485.1,763.5) rotate(-90)" text-anchor="end" font-size="10.5" fill="#333" font-family='"Liberation Sans", sans-serif'>-20</text><line x1="504.5" y1="555" x2="504.5" y2="757.5" stroke="#d9d9d9"/><text transform="translate(509.1,763.5) rotate(-90)" text-anchor="end" font-size="10.5" fill="#333" font-family='"Liberation Sans", sans-serif'>0</text><line x1="529.5" y1="555" x2="529.5" y2="757.5" stroke="#d9d9d9"/><text transform="translate(534.1,763.5) rotate(-90)" text-anchor="end" font-size="10.5" fill="#333" font-family='"Liberation Sans", sans-serif'>20</text><line x1="553.5" y1="555" x2="553.5" y2="757.5" stroke="#d9d9d9"/><text transform="translate(558.1,763.5) rotate(-90)" text-anchor="end" font-size="10.5" fill="#333" font-family='"Liberation Sans", sans-serif'>40</text><line x1="578.5" y1="555" x2="578.5" y2="757.5" stroke="#d9d9d9"/><text transform="translate(583.1,763.5) rotate(-90)" text-anchor="end" font-size="10.5" fill="#333" font-family='"Liberation Sans", sans-serif'>60</text><line x1="602.5" y1="555" x2="602.5" y2="757.5" stroke="#d9d9d9"/><text transform="translate(607.1,763.5) rotate(-90)" text-anchor="end" font-size="10.5" fill="#333" font-family='"Liberation Sans", sans-serif'>80</text><line x1="627.5" y1="555" x2="627.5" y2="757.5" stroke="#d9d9d9"/><text transform="translate(632.1,763.5) rotate(-90)" text-anchor="end" font-size="10.5" fill="#333" font-family='"Liberation Sans", sans-serif'>100</text><text x="633.5" y="761.0" font-size="10.4" fill="#333" font-family='"Liberation Sans", sans-serif'>0.00%</text><line x1="382.5" y1="731.5" x2="627.5" y2="731.5" stroke="#d9d9d9"/><text x="633.5" y="735.0" font-size="10.4" fill="#333" font-family='"Liberation Sans", sans-serif'>0.20%</text><line x1="382.5" y1="703.5" x2="627.5" y2="703.5" stroke="#d9d9d9"/><text x="633.5" y="707.0" font-size="10.4" fill="#333" font-family='"Liberation Sans", sans-serif'>0.40%</text><line x1="382.5" y1="676.5" x2="627.5" y2="676.5" stroke="#d9d9d9"/><text x="633.5" y="680.0" font-size="10.4" fill="#333" font-family='"Liberation Sans", sans-serif'>0.60%</text><line x1="382.5" y1="649.5" x2="627.5" y2="649.5" stroke="#d9d9d9"/><text x="633.5" y="653.0" font-size="10.4" fill="#333" font-family='"Liberation Sans", sans-serif'>0.80%</text><line x1="382.5" y1="621.5" x2="627.5" y2="621.5" stroke="#d9d9d9"/><text x="633.5" y="625.0" font-size="10.4" fill="#333" font-family='"Liberation Sans", sans-serif'>1.00%</text><line x1="382.5" y1="594.5" x2="627.5" y2="594.5" stroke="#d9d9d9"/><text x="633.5" y="598.0" font-size="10.4" fill="#333" font-family='"Liberation Sans", sans-serif'>1.20%</text><line x1="382.5" y1="567.5" x2="627.5" y2="567.5" stroke="#d9d9d9"/><text x="633.5" y="571.0" font-size="10.4" fill="#333" font-family='"Liberation Sans", sans-serif'>1.40%</text><polygon points="382.5,757.5 382.5,757.5 383.5,757.5 383.5,757.5 384.5,757.5 384.5,757.5 385.5,757.5 385.5,757.5 386.5,757.5 386.5,757.5 387.5,757.5 387.5,757.5 388.5,757.5 388.5,757.5 389.5,757.5 389.5,757.5 390.5,757.5 390.5,757.5 391.5,757.5 391.5,757.5 392.5,757.5 392.5,757.5 393.5,757.5 393.5,757.5 394.5,757.5 394.5,757.5 395.5,757.5 395.5,757.5 396.5,757.5 396.5,757.5 397.5,757.5 397.5,757.5 398.5,757.5 398.5,757.5 399.5,757.5 399.5,757.5 400.5,757.5 400.5,757.5 401.5,757.5 401.5,757.5 402.5,757.5 402.5,757.5 403.5,757.5 403.5,757.5 404.5,757.5 404.5,757.5 405.5,757.5 405.5,757.5 406.5,757.5 406.5,753.4 407.5,753.4 407.5,753.4 408.5,753.4 408.5,757.5 409.5,757.5 409.5,757.5 410.5,757.5 410.5,757.5 411.5,757.5 411.5,757.5 412.5,757.5 412.5,757.5 413.5,757.5 413.5,757.5 414.5,757.5 414.5,757.5 415.5,757.5 415.5,757.5 416.5,757.5 416.5,757.5 417.5,757.5 417.5,757.5 418.5,757.5 418.5,757.5 419.5,757.5 419.5,757.5 420.5,757.5 420.5,757.5 421.5,757.5 421.5,757.5 422.5,757.5 422.5,757.5 423.5,757.5 423.5,757.5 424.5,757.5 424.5,757.5 425.5,757.5 425.5,757.5 426.5,757.5 426.5,757.5 427.5,757.5 427.5,757.5 428.5,757.5 428.5,757.5 429.5,757.5 429.5,757.5 430.5,757.5 430.5,757.5 431.5,757.5 431.5,757.5 432.5,757.5 432.5,757.5 433.5,757.5 433.5,757.5 434.5,757.5 434.5,757.5 435.5,757.5 435.5,757.5 436.5,757.5 436.5,757.5 437.5,757.5 437.5,757.5 438.5,757.5 438.5,757.5 439.5,757.5 439.5,757.5 440.5,757.5 440.5,757.5 441.5,757.5 441.5,757.5 442.5,757.5 442.5,757.5 443.5,757.5 443.5,754.3 444.5,754.3 444.5,755.9 445.5,755.9 445.5,756.0 446.5,756.0 446.5,756.0 447.5,756.0 447.5,756.0 448.5,756.0 448.5,752.2 449.5,752.2 449.5,749.4 450.5,749.4 450.5,748.7 451.5,748.7 451.5,747.8 452.5,747.8 452.5,751.1 453.5,751.1 453.5,753.6 454.5,753.6 454.5,753.6 455.5,753.6 455.5,753.6 456.5,753.6 456.5,746.8 457.5,746.8 457.5,751.4 458.5,751.4 458.5,751.4 459.5,751.4 459.5,751.4 460.5,751.4 460.5,747.9 461.5,747.9 461.5,748.5 462.5,748.5 462.5,748.5 463.5,748.5 463.5,748.5 464.5,748.5 464.5,736.1 465.5,736.1 465.5,740.0 466.5,740.0 466.5,742.4 467.5,742.4 467.5,742.4 468.5,742.4 468.5,742.4 469.5,742.4 469.5,719.4 470.5,719.4 470.5,726.6 471.5,726.6 471.5,732.5 472.5,732.5 472.5,732.5 473.5,732.5 473.5,732.5 474.5,732.5 474.5,729.5 475.5,729.5 475.5,729.5 476.5,729.5 476.5,722.1 477.5,722.1 477.5,722.1 478.5,722.1 478.5,696.3 479.5,696.3 479.5,696.8 480.5,696.8 480.5,696.8 481.5,696.8 481.5,696.8 482.5,696.8 482.5,686.2 483.5,686.2 483.5,651.2 484.5,651.2 484.5,651.2 485.5,651.2 485.5,641.6 486.5,641.6 486.5,641.6 487.5,641.6 487.5,632.1 488.5,632.1 488.5,632.1 489.5,632.1 489.5,621.2 490.5,621.2 490.5,621.2 491.5,621.2 491.5,600.8 492.5,600.8 492.5,600.8 493.5,600.8 493.5,604.8 494.5,604.8 494.5,604.8 495.5,604.8 495.5,604.8 496.5,604.8 496.5,600.8 497.5,600.8 497.5,604.8 498.5,604.8 498.5,604.8 499.5,604.8 499.5,604.8 500.5,604.8 500.5,593.9 501.5,593.9 501.5,593.9 502.5,593.9 502.5,621.2 503.5,621.2 503.5,628.0 504.5,628.0 504.5,638.9 505.5,638.9 505.5,662.1 506.5,662.1 506.5,662.1 507.5,662.1 507.5,675.7 508.5,675.7 508.5,682.5 509.5,682.5 509.5,682.5 510.5,682.5 510.5,692.1 511.5,692.1 511.5,692.1 512.5,692.1 512.5,692.1 513.5,692.1 513.5,689.4 514.5,689.4 514.5,689.4 515.5,689.4 515.5,682.5 516.5,682.5 516.5,696.2 517.5,696.2 517.5,696.2 518.5,696.2 518.5,696.2 519.5,696.2 519.5,689.4 520.5,689.4 520.5,700.3 521.5,700.3 521.5,700.3 522.5,700.3 522.5,700.3 523.5,700.3 523.5,696.2 524.5,696.2 524.5,703.0 525.5,703.0 525.5,703.0 526.5,703.0 526.5,703.0 527.5,703.0 527.5,696.2 528.5,696.2 528.5,705.7 529.5,705.7 529.5,705.7 530.5,705.7 530.5,708.4 531.5,708.4 531.5,708.4 532.5,708.4 532.5,708.4 533.5,708.4 533.5,703.0 534.5,703.0 534.5,703.0 535.5,703.0 535.5,703.0 536.5,703.0 536.5,703.0 537.5,703.0 537.5,716.6 538.5,716.6 538.5,716.6 539.5,716.6 539.5,716.6 540.5,716.6 540.5,725.6 541.5,725.6 541.5,728.9 542.5,728.9 542.5,737.0 543.5,737.0 543.5,737.0 544.5,737.0 544.5,737.0 545.5,737.0 545.5,728.0 546.5,728.0 546.5,728.0 547.5,728.0 547.5,728.0 548.5,728.0 548.5,736.3 549.5,736.3 549.5,736.3 550.5,736.3 550.5,736.3 551.5,736.3 551.5,738.9 552.5,738.9 552.5,738.9 553.5,738.9 553.5,738.9 554.5,738.9 554.5,741.5 555.5,741.5 555.5,741.5 556.5,741.5 556.5,741.5 557.5,741.5 557.5,729.3 558.5,729.3 558.5,735.2 559.5,735.2 559.5,745.6 560.5,745.6 560.5,745.6 561.5,745.6 561.5,745.6 562.5,745.6 562.5,743.7 563.5,743.7 563.5,738.9 564.5,738.9 564.5,738.9 565.5,738.9 565.5,740.9 566.5,740.9 566.5,740.9 567.5,740.9 567.5,740.9 568.5,740.9 568.5,737.1 569.5,737.1 569.5,745.1 570.5,745.1 570.5,746.2 571.5,746.2 571.5,748.4 572.5,748.4 572.5,748.4 573.5,748.4 573.5,748.4 574.5,748.4 574.5,748.3 575.5,748.3 575.5,746.9 576.5,746.9 576.5,746.9 577.5,746.9 577.5,746.9 578.5,746.9 578.5,745.9 579.5,745.9 579.5,745.9 580.5,745.9 580.5,745.9 581.5,745.9 581.5,745.9 582.5,745.9 582.5,748.0 583.5,748.0 583.5,750.3 584.5,750.3 584.5,750.3 585.5,750.3 585.5,750.3 586.5,750.3 586.5,746.8 587.5,746.8 587.5,748.7 588.5,748.7 588.5,748.7 589.5,748.7 589.5,748.7 590.5,748.7 590.5,747.5 591.5,747.5 591.5,747.5 592.5,747.5 592.5,750.6 593.5,750.6 593.5,750.6 594.5,750.6 594.5,750.6 595.5,750.6 595.5,751.8 596.5,751.8 596.5,751.8 597.5,751.8 597.5,751.8 598.5,751.8 598.5,750.3 599.5,750.3 599.5,750.1 600.5,750.1 600.5,748.7 601.5,748.7 601.5,749.1 602.5,749.1 602.5,749.1 603.5,749.1 603.5,752.2 604.5,752.2 604.5,752.2 605.5,752.2 605.5,752.2 606.5,752.2 606.5,752.6 607.5,752.6 607.5,752.6 608.5,752.6 608.5,752.6 609.5,752.6 609.5,746.3 610.5,746.3 610.5,748.2 611.5,748.2 611.5,751.9 612.5,751.9 612.5,751.9 613.5,751.9 613.5,751.9 614.5,751.9 614.5,751.4 615.5,751.4 615.5,751.4 616.5,751.4 616.5,749.1 617.5,749.1 617.5,750.5 618.5,750.5 618.5,750.5 619.5,750.5 619.5,750.5 620.5,750.5 620.5,748.0 621.5,748.0 621.5,754.6 622.5,754.6 622.5,754.6 623.5,754.6 623.5,754.6 624.5,754.6 624.5,754.1 625.5,754.1 625.5,755.5 626.5,755.5 626.5,755.5 627.5,755.5 627.5,757.5" fill="#3aa03a" fill-opacity="0.56"/><polygon points="488.7,757.5 488.5,610.3 489.5,610.3 489.5,610.3 490.5,610.3 490.5,610.3 491.5,610.3 491.5,610.3 492.5,610.3 492.5,610.3 493.5,610.3 493.5,610.3 494.5,610.3 494.5,610.3 495.5,610.3 495.5,610.3 496.5,610.3 496.5,610.3 497.5,610.3 497.5,610.3 498.5,610.3 498.5,610.3 499.5,610.3 499.5,610.3 500.5,610.3 500.5,610.3 501.5,610.3 501.5,610.3 502.5,610.3 502.5,610.3 503.5,610.3 503.5,610.3 504.5,610.3 504.5,638.9 505.5,638.9 505.5,662.1 506.5,662.1 506.5,662.1 507.5,662.1 507.5,675.7 508.5,675.7 508.5,682.5 509.5,682.5 509.5,682.5 510.5,682.5 510.5,692.1 511.5,692.1 511.5,692.1 512.5,692.1 512.5,692.1 513.5,692.1 513.5,689.4 514.5,689.4 514.5,689.4 515.5,689.4 515.5,682.5 516.5,682.5 516.5,696.2 517.5,696.2 517.5,696.2 518.5,696.2 518.5,696.2 519.5,696.2 519.5,689.4 520.5,689.4 520.5,700.3 521.5,700.3 521.5,700.3 522.5,700.3 522.5,700.3 523.5,700.3 523.5,696.2 524.5,696.2 524.5,703.0 525.5,703.0 525.5,703.0 526.5,703.0 526.5,703.0 527.5,703.0 527.5,696.2 528.5,696.2 528.5,705.7 529.5,705.7 529.5,705.7 530.5,705.7 530.5,708.4 531.5,708.4 531.5,708.4 532.5,708.4 532.5,708.4 533.5,708.4 533.5,703.0 534.5,703.0 534.5,703.0 535.5,703.0 535.5,757.5" fill="url(#gg)"/><polyline points="383.0,757.5 384.0,757.5 385.0,757.5 386.0,757.5 387.0,757.5 388.0,757.5 389.0,753.4 390.0,757.5 391.0,757.5 392.0,757.5 393.0,757.5 394.0,757.5 395.0,757.5 396.0,757.5 397.0,757.5 398.0,757.5 399.0,757.5 400.0,757.5 401.0,757.5 402.0,757.5 403.0,757.5 404.0,757.5 405.0,757.5 406.0,753.4 407.0,753.4 408.0,753.4 409.0,753.4 410.0,757.5 411.0,757.5 412.0,757.5 413.0,757.5 414.0,757.5 415.0,757.5 416.0,757.5 417.0,757.5 418.0,757.5 419.0,757.5 420.0,757.5 421.0,757.5 422.0,757.5 423.0,757.5 424.0,753.4 425.0,757.5 426.0,753.4 427.0,757.5 428.0,757.5 429.0,757.5 430.0,757.5 431.0,757.5 432.0,757.5 433.0,753.4 434.0,753.4 435.0,757.5 436.0,757.5 437.0,757.5 438.0,757.5 439.0,753.4 440.0,757.5 441.0,757.5 442.0,757.5" fill="none" stroke="#3c9f3c" stroke-opacity="0.6" stroke-width="1.2"/><polyline points="440.0,757.5 441.0,757.5 442.0,757.5 443.0,752.2 444.0,754.3 445.0,751.8 446.0,755.9 447.0,756.0 448.0,752.2 449.0,749.4 450.0,748.7 451.0,747.8 452.0,746.0 453.0,746.1 454.0,751.1 455.0,753.6 456.0,745.6 457.0,743.5 458.0,746.8 459.0,751.4 460.0,747.9 461.0,747.4 462.0,744.1 463.0,748.5 464.0,729.5 465.0,736.1 466.0,732.7 467.0,740.0 468.0,742.4 469.0,719.4 470.0,717.1 471.0,713.4 472.0,726.6 473.0,732.5 474.0,688.5 475.0,729.5 476.0,680.4 477.0,722.1 478.0,696.3 479.0,694.5 480.0,657.3 481.0,696.8 482.0,686.2 483.0,644.2 484.0,651.2 485.0,621.2 486.0,641.6 487.0,617.1 488.0,632.1 489.0,604.8" fill="none" stroke="#3c9f3c" stroke-opacity="0.65" stroke-width="1.3"/><polyline points="535.0,692.1 536.0,673.0 537.0,703.0 538.0,689.4 539.0,716.6 540.0,700.3 541.0,697.1 542.0,725.6 543.0,728.9 544.0,737.0 545.0,706.4 546.0,706.3 547.0,728.0 548.0,718.5 549.0,723.2 550.0,736.3 551.0,715.8 552.0,715.3 553.0,738.9 554.0,729.9 555.0,735.3 556.0,741.5 557.0,729.3 558.0,724.8 559.0,723.0 560.0,735.2 561.0,745.6 562.0,743.7 563.0,735.8 564.0,727.5 565.0,738.9 566.0,731.3 567.0,740.9 568.0,733.9 569.0,734.3 570.0,737.1 571.0,745.1 572.0,746.2 573.0,748.4 574.0,748.3 575.0,743.6 576.0,744.1 577.0,746.9 578.0,735.7 579.0,745.9 580.0,744.7 581.0,745.9 582.0,745.8 583.0,739.8 584.0,748.0 585.0,750.3 586.0,741.5 587.0,743.7 588.0,746.8 589.0,748.7 590.0,743.5 591.0,739.3 592.0,747.5 593.0,742.6 594.0,750.6 595.0,749.4 596.0,742.0 597.0,751.8 598.0,750.3 599.0,750.1 600.0,742.9 601.0,748.7 602.0,746.9 603.0,749.1 604.0,746.7 605.0,752.2 606.0,747.0 607.0,751.8 608.0,752.6 609.0,745.2 610.0,745.3 611.0,746.3 612.0,748.2 613.0,751.9 614.0,751.1 615.0,751.4 616.0,748.1 617.0,744.4 618.0,749.1 619.0,750.5 620.0,746.3 621.0,747.4 622.0,748.0 623.0,754.6 624.0,754.1 625.0,753.0 626.0,750.9 627.0,755.5" fill="none" stroke="#3c9f3c" stroke-opacity="0.65" stroke-width="1.3"/><polyline points="489.0,604.8 490.0,621.2 491.0,600.8 492.0,573.5 493.0,600.8 494.0,587.1 495.0,604.8 496.0,593.9 497.0,600.8 498.0,573.5 499.0,604.8 500.0,580.3 501.0,555.8 502.0,593.9 503.0,580.3 504.0,621.2 505.0,628.0 506.0,638.9 507.0,662.1 508.0,655.3 509.0,675.7 510.0,682.5 511.0,673.0 512.0,692.1 513.0,652.5 514.0,689.4 515.0,678.4 516.0,645.7 517.0,682.5 518.0,696.2 519.0,626.7 520.0,689.4 521.0,673.0 522.0,700.3 523.0,662.1 524.0,696.2 525.0,682.5 526.0,703.0 527.0,664.8 528.0,696.2 529.0,686.6 530.0,705.7 531.0,689.4 532.0,708.4 533.0,670.3 534.0,703.0 535.0,692.1 536.0,673.0" fill="none" stroke="#0e870e" stroke-width="1.6"/><line x1="488.7" y1="605" x2="488.7" y2="757.5" stroke="#000" stroke-width="1.3"/><line x1="504.6" y1="555" x2="504.6" y2="757.5" stroke="#333" stroke-width="1"/><line x1="535.5" y1="720" x2="535.5" y2="757.5" stroke="#000" stroke-width="1.3"/></svg><svg class="a" style="left:678px;top:545px" width="296" height="250" viewBox="678 545 296 250"><line x1="704.5" y1="555" x2="704.5" y2="752.9" stroke="#d9d9d9"/><text transform="translate(708.5,758) rotate(-90)" text-anchor="end" font-size="10.5" fill="#333" font-family='"Liberation Sans", sans-serif'>0</text><line x1="732.5" y1="555" x2="732.5" y2="752.9" stroke="#d9d9d9"/><text transform="translate(736.5,758) rotate(-90)" text-anchor="end" font-size="10.5" fill="#333" font-family='"Liberation Sans", sans-serif'>170</text><line x1="761.5" y1="555" x2="761.5" y2="752.9" stroke="#d9d9d9"/><text transform="translate(765.5,758) rotate(-90)" text-anchor="end" font-size="10.5" fill="#333" font-family='"Liberation Sans", sans-serif'>340</text><line x1="790.5" y1="555" x2="790.5" y2="752.9" stroke="#d9d9d9"/><text transform="translate(794.5,758) rotate(-90)" text-anchor="end" font-size="10.5" fill="#333" font-family='"Liberation Sans", sans-serif'>510</text><line x1="819.5" y1="555" x2="819.5" y2="752.9" stroke="#d9d9d9"/><text transform="translate(823.5,758) rotate(-90)" text-anchor="end" font-size="10.5" fill="#333" font-family='"Liberation Sans", sans-serif'>680</text><line x1="848.5" y1="555" x2="848.5" y2="752.9" stroke="#d9d9d9"/><text transform="translate(852.5,758) rotate(-90)" text-anchor="end" font-size="10.5" fill="#333" font-family='"Liberation Sans", sans-serif'>850</text><line x1="877.5" y1="555" x2="877.5" y2="752.9" stroke="#d9d9d9"/><text transform="translate(881.5,758) rotate(-90)" text-anchor="end" font-size="10.5" fill="#333" font-family='"Liberation Sans", sans-serif'>1,020</text><line x1="906.5" y1="555" x2="906.5" y2="752.9" stroke="#d9d9d9"/><text transform="translate(910.5,758) rotate(-90)" text-anchor="end" font-size="10.5" fill="#333" font-family='"Liberation Sans", sans-serif'>1,190</text><line x1="688" y1="753.5" x2="933.5" y2="753.5" stroke="#d9d9d9"/><text x="939" y="757.0" font-size="10.4" fill="#333" font-family='"Liberation Sans", sans-serif'>0.00%</text><line x1="688" y1="731.5" x2="933.5" y2="731.5" stroke="#d9d9d9"/><text x="939" y="735.0" font-size="10.4" fill="#333" font-family='"Liberation Sans", sans-serif'>0.10%</text><line x1="688" y1="709.5" x2="933.5" y2="709.5" stroke="#d9d9d9"/><text x="939" y="713.0" font-size="10.4" fill="#333" font-family='"Liberation Sans", sans-serif'>0.20%</text><line x1="688" y1="687.5" x2="933.5" y2="687.5" stroke="#d9d9d9"/><text x="939" y="691.0" font-size="10.4" fill="#333" font-family='"Liberation Sans", sans-serif'>0.30%</text><line x1="688" y1="665.5" x2="933.5" y2="665.5" stroke="#d9d9d9"/><text x="939" y="669.0" font-size="10.4" fill="#333" font-family='"Liberation Sans", sans-serif'>0.40%</text><line x1="688" y1="643.5" x2="933.5" y2="643.5" stroke="#d9d9d9"/><text x="939" y="647.0" font-size="10.4" fill="#333" font-family='"Liberation Sans", sans-serif'>0.50%</text><line x1="688" y1="621.5" x2="933.5" y2="621.5" stroke="#d9d9d9"/><text x="939" y="625.0" font-size="10.4" fill="#333" font-family='"Liberation Sans", sans-serif'>0.60%</text><line x1="688" y1="599.5" x2="933.5" y2="599.5" stroke="#d9d9d9"/><text x="939" y="603.0" font-size="10.4" fill="#333" font-family='"Liberation Sans", sans-serif'>0.70%</text><line x1="688" y1="577.5" x2="933.5" y2="577.5" stroke="#d9d9d9"/><text x="939" y="581.0" font-size="10.4" fill="#333" font-family='"Liberation Sans", sans-serif'>0.80%</text><rect x="688" y="730.9" width="1" height="22.0" fill="#3d64dc" fill-opacity="0.35"/><rect x="688" y="741.9" width="1" height="11.0" fill="#3d64dc" fill-opacity="0.35"/><rect x="689" y="719.9" width="1" height="33.0" fill="#3d64dc" fill-opacity="0.35"/><rect x="689" y="730.9" width="1" height="22.0" fill="#3d64dc" fill-opacity="0.35"/><rect x="690" y="708.9" width="1" height="44.0" fill="#3d64dc" fill-opacity="0.35"/><rect x="690" y="730.9" width="1" height="22.0" fill="#3d64dc" fill-opacity="0.35"/><rect x="691" y="675.9" width="1" height="77.0" fill="#3d64dc" fill-opacity="0.35"/><rect x="691" y="708.9" width="1" height="44.0" fill="#3d64dc" fill-opacity="0.35"/><rect x="692" y="653.9" width="1" height="99.0" fill="#3d64dc" fill-opacity="0.35"/><rect x="692" y="697.9" width="1" height="55.0" fill="#3d64dc" fill-opacity="0.35"/><rect x="693" y="631.9" width="1" height="121.0" fill="#3d64dc" fill-opacity="0.35"/><rect x="693" y="708.9" width="1" height="44.0" fill="#3d64dc" fill-opacity="0.35"/><rect x="694" y="598.9" width="1" height="154.0" fill="#3d64dc" fill-opacity="0.35"/><rect x="694" y="708.9" width="1" height="44.0" fill="#3d64dc" fill-opacity="0.35"/><rect x="695" y="587.9" width="1" height="165.0" fill="#3d64dc" fill-opacity="0.35"/><rect x="695" y="653.9" width="1" height="99.0" fill="#3d64dc" fill-opacity="0.8"/><rect x="696" y="565.9" width="1" height="187.0" fill="#3d64dc" fill-opacity="0.35"/><rect x="696" y="565.9" width="1" height="187.0" fill="#3d64dc" fill-opacity="0.8"/><rect x="697" y="565.9" width="1" height="187.0" fill="#3d64dc" fill-opacity="0.35"/><rect x="697" y="620.9" width="1" height="132.0" fill="#3d64dc" fill-opacity="0.8"/><rect x="698" y="598.9" width="1" height="154.0" fill="#3d64dc" fill-opacity="0.35"/><rect x="698" y="642.9" width="1" height="110.0" fill="#3d64dc" fill-opacity="0.8"/><rect x="699" y="631.9" width="1" height="121.0" fill="#3d64dc" fill-opacity="0.35"/><rect x="699" y="686.9" width="1" height="66.0" fill="#3d64dc" fill-opacity="0.8"/><rect x="700" y="554.9" width="1" height="198.0" fill="#3d64dc" fill-opacity="0.35"/><rect x="700" y="587.9" width="1" height="165.0" fill="#3d64dc" fill-opacity="0.8"/><rect x="701" y="554.9" width="1" height="198.0" fill="#3d64dc" fill-opacity="0.35"/><rect x="701" y="598.9" width="1" height="154.0" fill="#3d64dc" fill-opacity="0.8"/><rect x="702" y="565.9" width="1" height="187.0" fill="#3d64dc" fill-opacity="0.35"/><rect x="702" y="653.9" width="1" height="99.0" fill="#3d64dc" fill-opacity="0.8"/><rect x="703" y="576.9" width="1" height="176.0" fill="#3d64dc" fill-opacity="0.35"/><rect x="703" y="620.9" width="1" height="132.0" fill="#3d64dc" fill-opacity="0.8"/><rect x="704" y="576.9" width="1" height="176.0" fill="#3d64dc" fill-opacity="0.35"/><rect x="704" y="576.9" width="1" height="176.0" fill="#3d64dc" fill-opacity="0.8"/><rect x="705" y="598.9" width="1" height="154.0" fill="#3d64dc" fill-opacity="0.35"/><rect x="705" y="598.9" width="1" height="154.0" fill="#3d64dc" fill-opacity="0.8"/><rect x="706" y="609.9" width="1" height="143.0" fill="#3d64dc" fill-opacity="0.35"/><rect x="706" y="653.9" width="1" height="99.0" fill="#3d64dc" fill-opacity="0.8"/><rect x="707" y="587.9" width="1" height="165.0" fill="#3d64dc" fill-opacity="0.35"/><rect x="707" y="609.9" width="1" height="143.0" fill="#3d64dc" fill-opacity="0.8"/><rect x="708" y="620.9" width="1" height="132.0" fill="#3d64dc" fill-opacity="0.35"/><rect x="708" y="642.9" width="1" height="110.0" fill="#3d64dc" fill-opacity="0.8"/><rect x="709" y="631.9" width="1" height="121.0" fill="#3d64dc" fill-opacity="0.35"/><rect x="709" y="631.9" width="1" height="121.0" fill="#3d64dc" fill-opacity="0.8"/><rect x="710" y="587.9" width="1" height="165.0" fill="#3d64dc" fill-opacity="0.35"/><rect x="710" y="642.9" width="1" height="110.0" fill="#3d64dc" fill-opacity="0.8"/><rect x="711" y="642.9" width="1" height="110.0" fill="#3d64dc" fill-opacity="0.35"/><rect x="711" y="653.9" width="1" height="99.0" fill="#3d64dc" fill-opacity="0.8"/><rect x="712" y="631.9" width="1" height="121.0" fill="#3d64dc" fill-opacity="0.35"/><rect x="712" y="631.9" width="1" height="121.0" fill="#3d64dc" fill-opacity="0.8"/><rect x="713" y="653.9" width="1" height="99.0" fill="#3d64dc" fill-opacity="0.35"/><rect x="713" y="653.9" width="1" height="99.0" fill="#3d64dc" fill-opacity="0.8"/><rect x="714" y="631.9" width="1" height="121.0" fill="#3d64dc" fill-opacity="0.35"/><rect x="714" y="631.9" width="1" height="121.0" fill="#3d64dc" fill-opacity="0.8"/><rect x="715" y="664.9" width="1" height="88.0" fill="#3d64dc" fill-opacity="0.35"/><rect x="715" y="697.9" width="1" height="55.0" fill="#3d64dc" fill-opacity="0.8"/><rect x="716" y="653.9" width="1" height="99.0" fill="#3d64dc" fill-opacity="0.35"/><rect x="716" y="686.9" width="1" height="66.0" fill="#3d64dc" fill-opacity="0.8"/><rect x="717" y="675.9" width="1" height="77.0" fill="#3d64dc" fill-opacity="0.35"/><rect x="717" y="697.9" width="1" height="55.0" fill="#3d64dc" fill-opacity="0.8"/><rect x="718" y="664.9" width="1" height="88.0" fill="#3d64dc" fill-opacity="0.35"/><rect x="718" y="664.9" width="1" height="88.0" fill="#3d64dc" fill-opacity="0.8"/><rect x="719" y="686.9" width="1" height="66.0" fill="#3d64dc" fill-opacity="0.35"/><rect x="719" y="708.9" width="1" height="44.0" fill="#3d64dc" fill-opacity="0.8"/><rect x="720" y="675.9" width="1" height="77.0" fill="#3d64dc" fill-opacity="0.35"/><rect x="720" y="697.9" width="1" height="55.0" fill="#3d64dc" fill-opacity="0.8"/><rect x="721" y="686.9" width="1" height="66.0" fill="#3d64dc" fill-opacity="0.35"/><rect x="721" y="697.9" width="1" height="55.0" fill="#3d64dc" fill-opacity="0.8"/><rect x="722" y="686.9" width="1" height="66.0" fill="#3d64dc" fill-opacity="0.35"/><rect x="722" y="697.9" width="1" height="55.0" fill="#3d64dc" fill-opacity="0.8"/><rect x="723" y="697.9" width="1" height="55.0" fill="#3d64dc" fill-opacity="0.35"/><rect x="723" y="697.9" width="1" height="55.0" fill="#3d64dc" fill-opacity="0.8"/><rect x="724" y="686.9" width="1" height="66.0" fill="#3d64dc" fill-opacity="0.35"/><rect x="724" y="697.9" width="1" height="55.0" fill="#3d64dc" fill-opacity="0.8"/><rect x="725" y="708.9" width="1" height="44.0" fill="#3d64dc" fill-opacity="0.35"/><rect x="725" y="719.9" width="1" height="33.0" fill="#3d64dc" fill-opacity="0.8"/><rect x="726" y="708.9" width="1" height="44.0" fill="#3d64dc" fill-opacity="0.35"/><rect x="726" y="730.9" width="1" height="22.0" fill="#3d64dc" fill-opacity="0.8"/><rect x="727" y="697.9" width="1" height="55.0" fill="#3d64dc" fill-opacity="0.35"/><rect x="727" y="708.9" width="1" height="44.0" fill="#3d64dc" fill-opacity="0.8"/><rect x="728" y="719.9" width="1" height="33.0" fill="#3d64dc" fill-opacity="0.35"/><rect x="728" y="719.9" width="1" height="33.0" fill="#3d64dc" fill-opacity="0.8"/><rect x="729" y="686.9" width="1" height="66.0" fill="#3d64dc" fill-opacity="0.35"/><rect x="729" y="686.9" width="1" height="66.0" fill="#3d64dc" fill-opacity="0.8"/><rect x="730" y="708.9" width="1" height="44.0" fill="#3d64dc" fill-opacity="0.35"/><rect x="730" y="708.9" width="1" height="44.0" fill="#3d64dc" fill-opacity="0.8"/><rect x="731" y="697.9" width="1" height="55.0" fill="#3d64dc" fill-opacity="0.35"/><rect x="731" y="697.9" width="1" height="55.0" fill="#3d64dc" fill-opacity="0.8"/><rect x="732" y="719.9" width="1" height="33.0" fill="#3d64dc" fill-opacity="0.35"/><rect x="732" y="730.9" width="1" height="22.0" fill="#3d64dc" fill-opacity="0.8"/><rect x="733" y="730.9" width="1" height="22.0" fill="#3d64dc" fill-opacity="0.35"/><rect x="733" y="730.9" width="1" height="22.0" fill="#3d64dc" fill-opacity="0.8"/><rect x="734" y="719.9" width="1" height="33.0" fill="#3d64dc" fill-opacity="0.35"/><rect x="734" y="719.9" width="1" height="33.0" fill="#3d64dc" fill-opacity="0.8"/><rect x="735" y="730.9" width="1" height="22.0" fill="#3d64dc" fill-opacity="0.35"/><rect x="735" y="730.9" width="1" height="22.0" fill="#3d64dc" fill-opacity="0.8"/><rect x="700" y="587.9" width="1" height="165.0" fill="#3d64dc" fill-opacity="0.55"/><rect x="701" y="609.9" width="1" height="143.0" fill="#3d64dc" fill-opacity="0.55"/><rect x="702" y="587.9" width="1" height="165.0" fill="#3d64dc" fill-opacity="0.55"/><rect x="703" y="598.9" width="1" height="154.0" fill="#3d64dc" fill-opacity="0.55"/><rect x="704" y="609.9" width="1" height="143.0" fill="#3d64dc" fill-opacity="0.55"/><rect x="705" y="587.9" width="1" height="165.0" fill="#3d64dc" fill-opacity="0.55"/><rect x="706" y="598.9" width="1" height="154.0" fill="#3d64dc" fill-opacity="0.55"/><rect x="707" y="598.9" width="1" height="154.0" fill="#3d64dc" fill-opacity="0.55"/><rect x="708" y="598.9" width="1" height="154.0" fill="#3d64dc" fill-opacity="0.55"/><rect x="709" y="631.9" width="1" height="121.0" fill="#3d64dc" fill-opacity="0.55"/><rect x="710" y="609.9" width="1" height="143.0" fill="#3d64dc" fill-opacity="0.55"/><rect x="711" y="620.9" width="1" height="132.0" fill="#3d64dc" fill-opacity="0.55"/><rect x="712" y="631.9" width="1" height="121.0" fill="#3d64dc" fill-opacity="0.55"/><rect x="713" y="631.9" width="1" height="121.0" fill="#3d64dc" fill-opacity="0.55"/><rect x="714" y="653.9" width="1" height="99.0" fill="#3d64dc" fill-opacity="0.55"/><rect x="715" y="631.9" width="1" height="121.0" fill="#3d64dc" fill-opacity="0.55"/><rect x="716" y="631.9" width="1" height="121.0" fill="#3d64dc" fill-opacity="0.55"/><rect x="717" y="631.9" width="1" height="121.0" fill="#3d64dc" fill-opacity="0.55"/><rect x="718" y="631.9" width="1" height="121.0" fill="#3d64dc" fill-opacity="0.55"/><rect x="719" y="675.9" width="1" height="77.0" fill="#3d64dc" fill-opacity="0.55"/><rect x="720" y="664.9" width="1" height="88.0" fill="#3d64dc" fill-opacity="0.55"/><rect x="721" y="664.9" width="1" height="88.0" fill="#3d64dc" fill-opacity="0.55"/><rect x="722" y="653.9" width="1" height="99.0" fill="#3d64dc" fill-opacity="0.55"/><rect x="723" y="653.9" width="1" height="99.0" fill="#3d64dc" fill-opacity="0.55"/><rect x="724" y="653.9" width="1" height="99.0" fill="#3d64dc" fill-opacity="0.55"/><rect x="725" y="697.9" width="1" height="55.0" fill="#3d64dc" fill-opacity="0.55"/><rect x="726" y="675.9" width="1" height="77.0" fill="#3d64dc" fill-opacity="0.55"/><rect x="727" y="675.9" width="1" height="77.0" fill="#3d64dc" fill-opacity="0.55"/><rect x="728" y="686.9" width="1" height="66.0" fill="#3d64dc" fill-opacity="0.55"/><rect x="729" y="686.9" width="1" height="66.0" fill="#3d64dc" fill-opacity="0.55"/><rect x="730" y="686.9" width="1" height="66.0" fill="#3d64dc" fill-opacity="0.55"/><rect x="731" y="697.9" width="1" height="55.0" fill="#3d64dc" fill-opacity="0.55"/><rect x="732" y="686.9" width="1" height="66.0" fill="#3d64dc" fill-opacity="0.55"/><rect x="733" y="686.9" width="1" height="66.0" fill="#3d64dc" fill-opacity="0.55"/><rect x="734" y="697.9" width="1" height="55.0" fill="#3d64dc" fill-opacity="0.55"/><rect x="735" y="697.9" width="1" height="55.0" fill="#3d64dc" fill-opacity="0.55"/><rect x="737" y="730.9" width="1" height="22.0" fill="#3d64dc" fill-opacity="0.3"/><rect x="741" y="719.9" width="1" height="33.0" fill="#3d64dc" fill-opacity="0.3"/><rect x="742" y="741.9" width="1" height="11.0" fill="#3d64dc" fill-opacity="0.3"/><rect x="743" y="697.9" width="1" height="55.0" fill="#3d64dc" fill-opacity="0.3"/><rect x="744" y="719.9" width="1" height="33.0" fill="#3d64dc" fill-opacity="0.3"/><rect x="745" y="697.9" width="1" height="55.0" fill="#3d64dc" fill-opacity="0.3"/><rect x="750" y="697.9" width="1" height="55.0" fill="#3d64dc" fill-opacity="0.3"/><rect x="751" y="719.9" width="1" height="33.0" fill="#3d64dc" fill-opacity="0.3"/><rect x="753" y="697.9" width="1" height="55.0" fill="#3d64dc" fill-opacity="0.3"/><rect x="754" y="697.9" width="1" height="55.0" fill="#3d64dc" fill-opacity="0.3"/><rect x="759" y="719.9" width="1" height="33.0" fill="#3d64dc" fill-opacity="0.3"/><rect x="760" y="730.9" width="1" height="22.0" fill="#3d64dc" fill-opacity="0.3"/><rect x="761" y="741.9" width="1" height="11.0" fill="#3d64dc" fill-opacity="0.3"/><rect x="762" y="741.9" width="1" height="11.0" fill="#3d64dc" fill-opacity="0.3"/><rect x="764" y="730.9" width="1" height="22.0" fill="#3d64dc" fill-opacity="0.3"/><rect x="765" y="730.9" width="1" height="22.0" fill="#3d64dc" fill-opacity="0.3"/><rect x="767" y="730.9" width="1" height="22.0" fill="#3d64dc" fill-opacity="0.3"/><rect x="769" y="741.9" width="1" height="11.0" fill="#3d64dc" fill-opacity="0.3"/><rect x="770" y="741.9" width="1" height="11.0" fill="#3d64dc" fill-opacity="0.3"/><rect x="771" y="730.9" width="1" height="22.0" fill="#3d64dc" fill-opacity="0.3"/><rect x="772" y="741.9" width="1" height="11.0" fill="#3d64dc" fill-opacity="0.3"/><rect x="773" y="730.9" width="1" height="22.0" fill="#3d64dc" fill-opacity="0.3"/><rect x="774" y="741.9" width="1" height="11.0" fill="#3d64dc" fill-opacity="0.3"/><rect x="775" y="741.9" width="1" height="11.0" fill="#3d64dc" fill-opacity="0.3"/><rect x="776" y="741.9" width="1" height="11.0" fill="#3d64dc" fill-opacity="0.3"/><rect x="782" y="730.9" width="1" height="22.0" fill="#3d64dc" fill-opacity="0.3"/><rect x="784" y="741.9" width="1" height="11.0" fill="#3d64dc" fill-opacity="0.3"/><rect x="785" y="741.9" width="1" height="11.0" fill="#3d64dc" fill-opacity="0.3"/><rect x="787" y="741.9" width="1" height="11.0" fill="#3d64dc" fill-opacity="0.3"/><rect x="789" y="730.9" width="1" height="22.0" fill="#3d64dc" fill-opacity="0.3"/><rect x="790" y="741.9" width="1" height="11.0" fill="#3d64dc" fill-opacity="0.3"/><rect x="791" y="741.9" width="1" height="11.0" fill="#3d64dc" fill-opacity="0.3"/><rect x="793" y="730.9" width="1" height="22.0" fill="#3d64dc" fill-opacity="0.3"/><rect x="794" y="741.9" width="1" height="11.0" fill="#3d64dc" fill-opacity="0.3"/><rect x="799" y="741.9" width="1" height="11.0" fill="#3d64dc" fill-opacity="0.3"/><rect x="801" y="730.9" width="1" height="22.0" fill="#3d64dc" fill-opacity="0.3"/><rect x="802" y="741.9" width="1" height="11.0" fill="#3d64dc" fill-opacity="0.3"/><rect x="804" y="741.9" width="1" height="11.0" fill="#3d64dc" fill-opacity="0.3"/><rect x="800" y="741.9" width="1" height="11.0" fill="#3d64dc" fill-opacity="0.32"/><rect x="801" y="741.9" width="1" height="11.0" fill="#3d64dc" fill-opacity="0.32"/><rect x="802" y="730.9" width="1" height="22.0" fill="#3d64dc" fill-opacity="0.32"/><rect x="803" y="741.9" width="1" height="11.0" fill="#3d64dc" fill-opacity="0.32"/><rect x="804" y="741.9" width="1" height="11.0" fill="#3d64dc" fill-opacity="0.32"/><rect x="805" y="730.9" width="1" height="22.0" fill="#3d64dc" fill-opacity="0.32"/><rect x="806" y="741.9" width="1" height="11.0" fill="#3d64dc" fill-opacity="0.32"/><rect x="812" y="741.9" width="1" height="11.0" fill="#3d64dc" fill-opacity="0.32"/><rect x="813" y="730.9" width="1" height="22.0" fill="#3d64dc" fill-opacity="0.32"/><rect x="814" y="741.9" width="1" height="11.0" fill="#3d64dc" fill-opacity="0.32"/><rect x="815" y="741.9" width="1" height="11.0" fill="#3d64dc" fill-opacity="0.32"/><rect x="816" y="741.9" width="1" height="11.0" fill="#3d64dc" fill-opacity="0.32"/><rect x="817" y="741.9" width="1" height="11.0" fill="#3d64dc" fill-opacity="0.32"/><rect x="821" y="741.9" width="1" height="11.0" fill="#3d64dc" fill-opacity="0.32"/><rect x="822" y="741.9" width="1" height="11.0" fill="#3d64dc" fill-opacity="0.32"/><rect x="823" y="741.9" width="1" height="11.0" fill="#3d64dc" fill-opacity="0.32"/><rect x="824" y="741.9" width="1" height="11.0" fill="#3d64dc" fill-opacity="0.32"/><rect x="827" y="741.9" width="1" height="11.0" fill="#3d64dc" fill-opacity="0.32"/><rect x="828" y="741.9" width="1" height="11.0" fill="#3d64dc" fill-opacity="0.32"/><rect x="829" y="741.9" width="1" height="11.0" fill="#3d64dc" fill-opacity="0.32"/><rect x="830" y="741.9" width="1" height="11.0" fill="#3d64dc" fill-opacity="0.32"/><rect x="834" y="730.9" width="1" height="22.0" fill="#3d64dc" fill-opacity="0.32"/><rect x="835" y="741.9" width="1" height="11.0" fill="#3d64dc" fill-opacity="0.32"/><rect x="836" y="741.9" width="1" height="11.0" fill="#3d64dc" fill-opacity="0.32"/><rect x="839" y="741.9" width="1" height="11.0" fill="#3d64dc" fill-opacity="0.32"/><rect x="840" y="741.9" width="1" height="11.0" fill="#3d64dc" fill-opacity="0.32"/><rect x="843" y="741.9" width="1" height="11.0" fill="#3d64dc" fill-opacity="0.32"/><rect x="844" y="741.9" width="1" height="11.0" fill="#3d64dc" fill-opacity="0.32"/><rect x="846" y="741.9" width="1" height="11.0" fill="#3d64dc" fill-opacity="0.32"/><rect x="848" y="741.9" width="1" height="11.0" fill="#3d64dc" fill-opacity="0.32"/><rect x="850" y="741.9" width="1" height="11.0" fill="#3d64dc" fill-opacity="0.32"/><rect x="857" y="741.9" width="1" height="11.0" fill="#3d64dc" fill-opacity="0.32"/><rect x="858" y="730.9" width="1" height="22.0" fill="#3d64dc" fill-opacity="0.32"/><rect x="859" y="741.9" width="1" height="11.0" fill="#3d64dc" fill-opacity="0.32"/><rect x="860" y="741.9" width="1" height="11.0" fill="#3d64dc" fill-opacity="0.32"/><rect x="861" y="741.9" width="1" height="11.0" fill="#3d64dc" fill-opacity="0.32"/><rect x="866" y="741.9" width="1" height="11.0" fill="#3d64dc" fill-opacity="0.32"/><rect x="870" y="741.9" width="1" height="11.0" fill="#3d64dc" fill-opacity="0.32"/><rect x="872" y="741.9" width="1" height="11.0" fill="#3d64dc" fill-opacity="0.32"/><rect x="874" y="741.9" width="1" height="11.0" fill="#3d64dc" fill-opacity="0.32"/><rect x="876" y="741.9" width="1" height="11.0" fill="#3d64dc" fill-opacity="0.32"/><rect x="882" y="741.9" width="1" height="11.0" fill="#3d64dc" fill-opacity="0.32"/><rect x="884" y="741.9" width="1" height="11.0" fill="#3d64dc" fill-opacity="0.32"/><rect x="886" y="741.9" width="1" height="11.0" fill="#3d64dc" fill-opacity="0.32"/><rect x="888" y="730.9" width="1" height="22.0" fill="#3d64dc" fill-opacity="0.32"/><rect x="890" y="741.9" width="1" height="11.0" fill="#3d64dc" fill-opacity="0.32"/><rect x="892" y="741.9" width="1" height="11.0" fill="#3d64dc" fill-opacity="0.32"/><rect x="904" y="741.9" width="1" height="11.0" fill="#3d64dc" fill-opacity="0.32"/><rect x="906" y="741.9" width="1" height="11.0" fill="#3d64dc" fill-opacity="0.32"/><rect x="909" y="741.9" width="1" height="11.0" fill="#3d64dc" fill-opacity="0.32"/><rect x="911" y="741.9" width="1" height="11.0" fill="#3d64dc" fill-opacity="0.32"/><rect x="913" y="741.9" width="1" height="11.0" fill="#3d64dc" fill-opacity="0.32"/><rect x="915" y="741.9" width="1" height="11.0" fill="#3d64dc" fill-opacity="0.32"/><rect x="917" y="741.9" width="1" height="11.0" fill="#3d64dc" fill-opacity="0.32"/><rect x="923" y="741.9" width="1" height="11.0" fill="#3d64dc" fill-opacity="0.32"/><rect x="924" y="741.9" width="1" height="11.0" fill="#3d64dc" fill-opacity="0.32"/><line x1="699.5" y1="632" x2="699.5" y2="752.9" stroke="#000" stroke-width="1.2"/><line x1="704.6" y1="555" x2="704.6" y2="752.9" stroke="#333" stroke-width="1"/><line x1="735.3" y1="742" x2="735.3" y2="752.9" stroke="#000" stroke-width="1.2"/></svg></body></html>
